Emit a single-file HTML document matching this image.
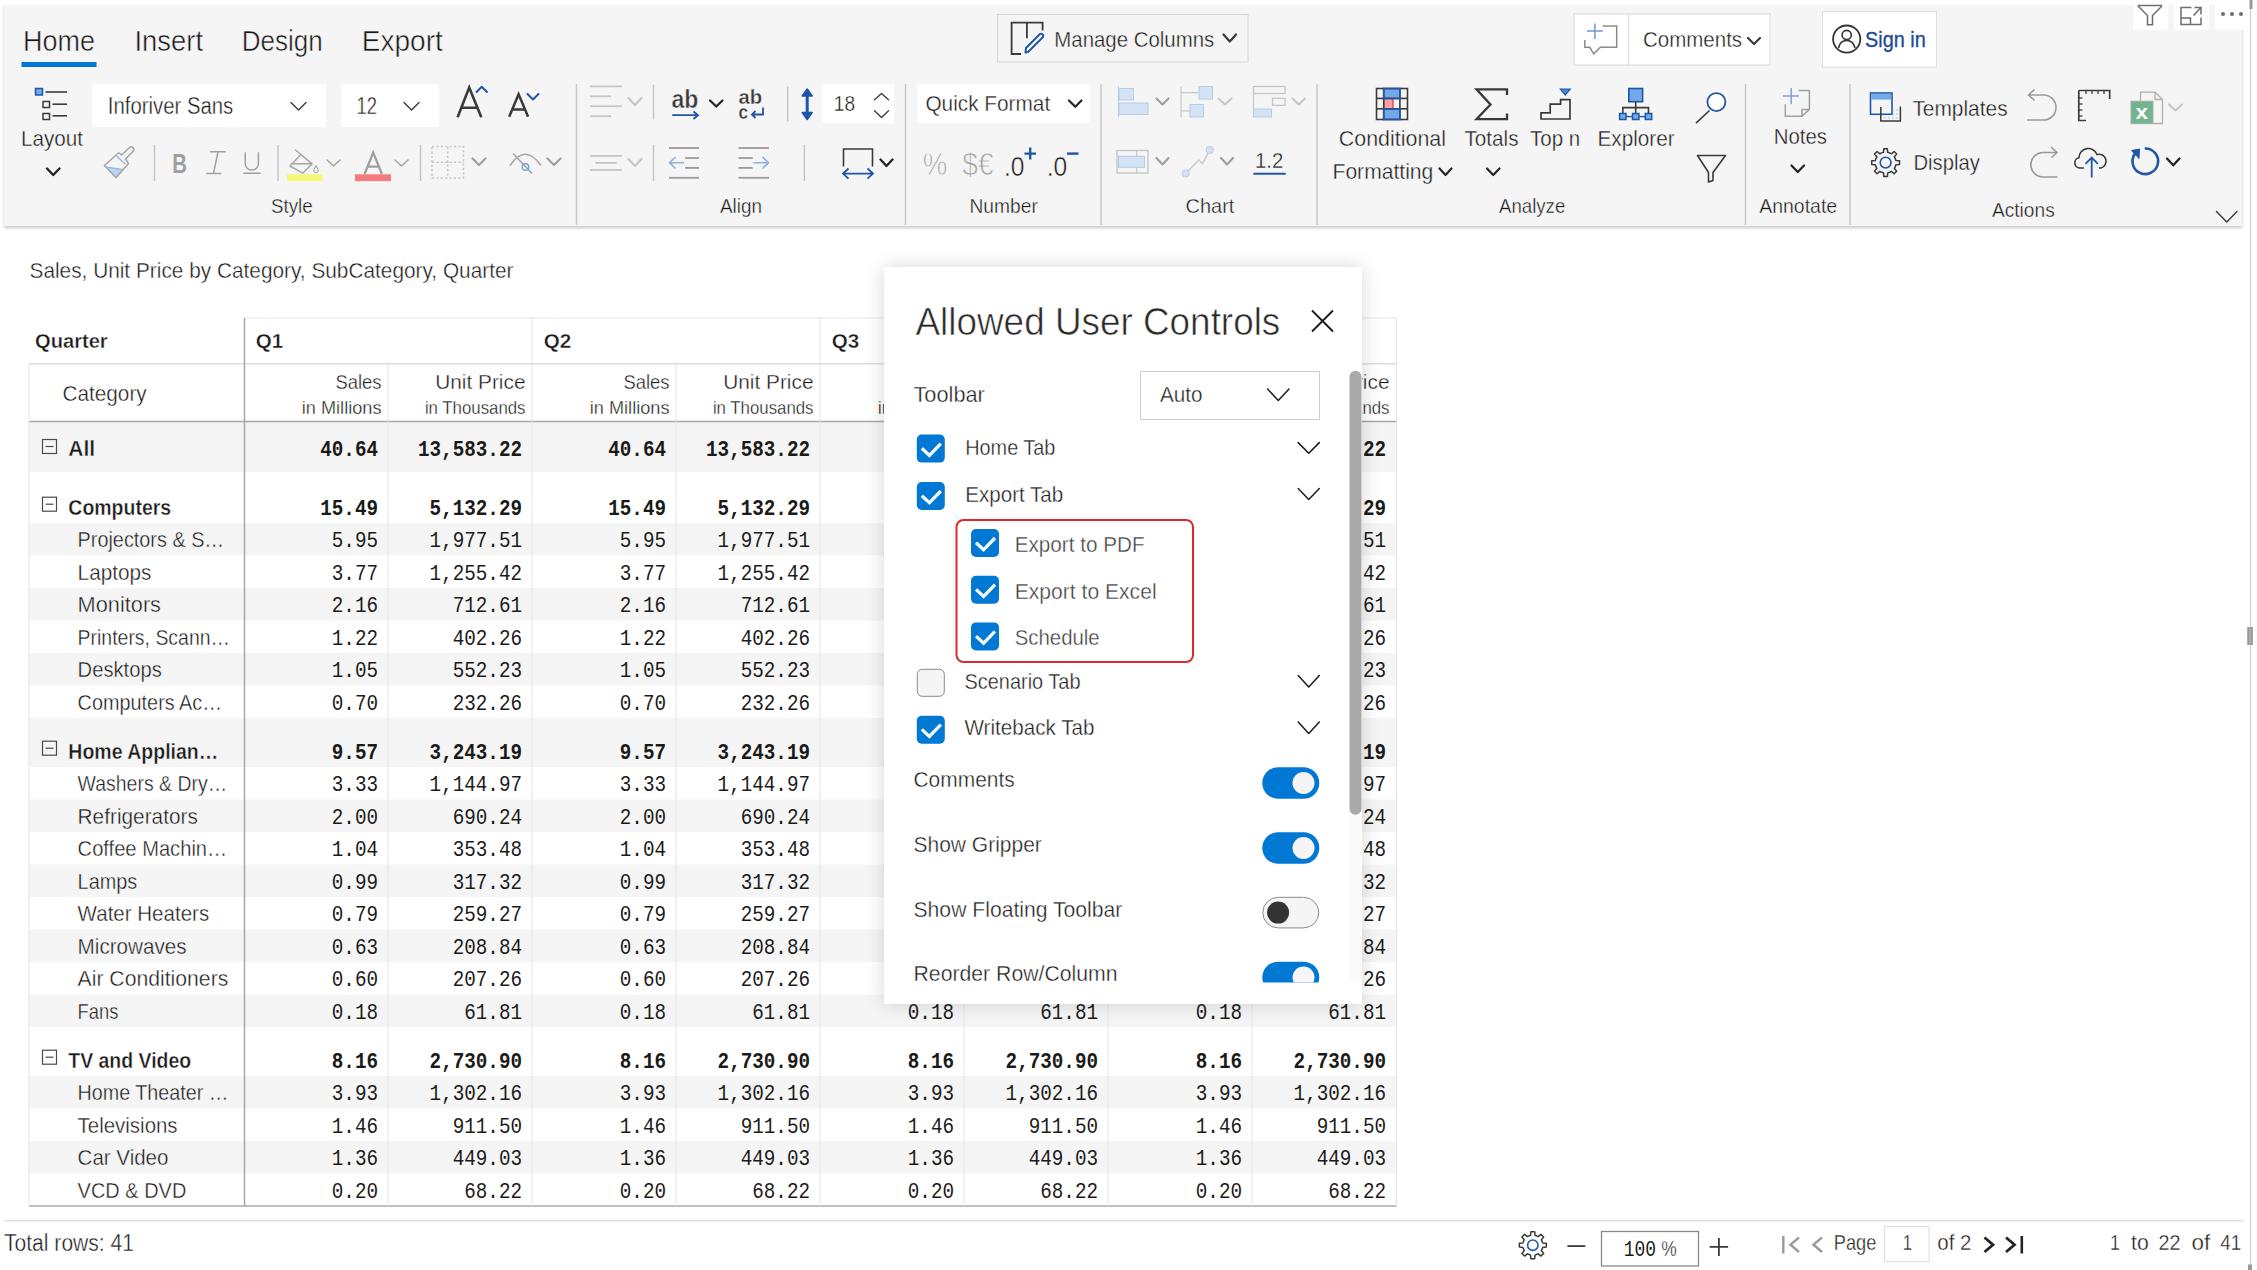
<!DOCTYPE html>
<html><head><meta charset="utf-8"><title>Inforiver</title>
<style>
html,body{margin:0;padding:0;background:#fff;width:2257px;height:1270px;overflow:hidden;font-family:"Liberation Sans",sans-serif;}
svg{position:absolute;left:0;top:0;font-family:"Liberation Sans",sans-serif;}
.rib{position:absolute;left:4px;top:5px;width:2238px;height:221px;background:#f5f5f5;box-shadow:0 2px 3px rgba(0,0,0,0.22);}
.dlg{position:absolute;left:884px;top:267px;width:478px;height:737px;background:#fff;box-shadow:0 0 18px rgba(0,0,0,0.16);}
</style></head><body>
<div class="rib"></div>
<svg width="2257" height="1270" viewBox="0 0 2257 1270">
<text x="23" y="51" font-size="29" fill="#1b1a19" textLength="72" lengthAdjust="spacingAndGlyphs"  stroke="#f5f5f5" stroke-width="0.49">Home</text>
<rect x="21.5" y="62" width="75" height="5" fill="#0078d4" />
<text x="134.5" y="51" font-size="29" fill="#1b1a19" textLength="68.5" lengthAdjust="spacingAndGlyphs"  stroke="#f5f5f5" stroke-width="0.49">Insert</text>
<text x="241.7" y="51" font-size="29" fill="#1b1a19" textLength="81" lengthAdjust="spacingAndGlyphs"  stroke="#f5f5f5" stroke-width="0.49">Design</text>
<text x="361.8" y="51" font-size="29" fill="#1b1a19" textLength="81" lengthAdjust="spacingAndGlyphs"  stroke="#f5f5f5" stroke-width="0.49">Export</text>
<line x1="576.5" y1="84" x2="576.5" y2="225" stroke="#c8c8c8" stroke-width="1.5" />
<line x1="905.5" y1="84" x2="905.5" y2="225" stroke="#c8c8c8" stroke-width="1.5" />
<line x1="1101" y1="84" x2="1101" y2="225" stroke="#c8c8c8" stroke-width="1.5" />
<line x1="1317" y1="84" x2="1317" y2="225" stroke="#c8c8c8" stroke-width="1.5" />
<line x1="1745.5" y1="84" x2="1745.5" y2="225" stroke="#c8c8c8" stroke-width="1.5" />
<line x1="1850" y1="84" x2="1850" y2="225" stroke="#c8c8c8" stroke-width="1.5" />
<text x="271" y="213" font-size="21" fill="#1b1a19" textLength="41.7" lengthAdjust="spacingAndGlyphs"  stroke="#f5f5f5" stroke-width="0.36">Style</text>
<text x="720" y="212.5" font-size="21" fill="#1b1a19" textLength="42" lengthAdjust="spacingAndGlyphs"  stroke="#f5f5f5" stroke-width="0.36">Align</text>
<text x="969.5" y="212.5" font-size="21" fill="#1b1a19" textLength="68.3" lengthAdjust="spacingAndGlyphs"  stroke="#f5f5f5" stroke-width="0.36">Number</text>
<text x="1185.6" y="213" font-size="21" fill="#1b1a19" textLength="48.8" lengthAdjust="spacingAndGlyphs"  stroke="#f5f5f5" stroke-width="0.36">Chart</text>
<text x="1499" y="212.5" font-size="21" fill="#1b1a19" textLength="66.3" lengthAdjust="spacingAndGlyphs"  stroke="#f5f5f5" stroke-width="0.36">Analyze</text>
<text x="1759.2" y="212.5" font-size="21" fill="#1b1a19" textLength="78" lengthAdjust="spacingAndGlyphs"  stroke="#f5f5f5" stroke-width="0.36">Annotate</text>
<text x="1992" y="216.8" font-size="21" fill="#1b1a19" textLength="62.7" lengthAdjust="spacingAndGlyphs"  stroke="#f5f5f5" stroke-width="0.36">Actions</text>
<rect x="997.5" y="14.5" width="250.5" height="47.5" fill="none" stroke="#d6d6d6" stroke-width="1"/>
<path d="M1021 54 L1011.6 54 L1011.6 22.7 L1042.6 22.7 L1042.6 30.5 M1026.9 22.7 L1026.9 38.2" stroke="#3b3a39" stroke-width="1.8" fill="none" />
<path d="M1028 52 L1041 39 L1043 37 a2.2 2.2 0 0 0 -3 -3 L1026 48 L1025.5 52.5 Z" stroke="#1e56a8" stroke-width="2" fill="#fff" stroke-linecap="round" stroke-linejoin="round"/>
<text x="1054.3" y="46.6" font-size="22.5" fill="#1b1a19" textLength="160" lengthAdjust="spacingAndGlyphs"  stroke="#f5f5f5" stroke-width="0.38">Manage Columns</text>
<path d="M1223.5 34.5 L1229.75 41.5 L1236 34.5" stroke="#3b3a39" stroke-width="2.2" fill="none" stroke-linecap="round" stroke-linejoin="round"/>
<rect x="1574" y="14" width="196" height="51" fill="#fff" stroke="#dadada" stroke-width="1"/>
<line x1="1628.7" y1="14" x2="1628.7" y2="65" stroke="#dadada" stroke-width="1" />
<path d="M1602.8 26 L1616.7 26 L1616.7 47.3 L1600.3 47.3 L1593.8 53.9 L1589.7 47.3 L1584.8 47.3 L1584.8 40" stroke="#8a8a8a" stroke-width="1.5" fill="none" />
<path d="M1586.9 31 L1602.8 31 M1594.9 23.6 L1594.9 39.1" stroke="#6f98d0" stroke-width="1.5" fill="none" />
<text x="1643" y="47.3" font-size="22.5" fill="#1b1a19" textLength="99.1" lengthAdjust="spacingAndGlyphs"  stroke="#ffffff" stroke-width="0.38">Comments</text>
<path d="M1748 38 L1754.0 44 L1760 38" stroke="#3b3a39" stroke-width="2.2" fill="none" stroke-linecap="round" stroke-linejoin="round"/>
<rect x="1822.5" y="11.5" width="114" height="55.5" fill="#fff" stroke="#e0e0e0" stroke-width="1"/>
<circle cx="1846.7" cy="39.1" r="13.6" fill="none" stroke="#333" stroke-width="1.8"/>
<circle cx="1846.7" cy="35" r="4.6" fill="none" stroke="#333" stroke-width="1.6"/>
<path d="M1838.5 48 Q1840 40.5 1846.7 40.5 Q1853.4 40.5 1855 48" stroke="#333" stroke-width="1.6" fill="none" />
<text x="1865.1" y="47.3" font-size="22.5" fill="#1d4b98" textLength="60.6" lengthAdjust="spacingAndGlyphs" stroke="#1d4b98" stroke-width="0.35">Sign in</text>
<rect x="2133" y="0" width="35" height="30" fill="#fff" />
<rect x="2174" y="0" width="35" height="30" fill="#fff" />
<rect x="2215" y="0" width="29" height="30" fill="#fff" />
<path d="M2138.5 5.5 L2161.5 5.5 L2161.5 6.5 L2152.5 15.5 L2152.5 24.8 L2147.5 24.8 L2147.5 15.5 L2138.5 6.5 Z" stroke="#6e6e6e" stroke-width="1.5" fill="none" />
<path d="M2191.5 7.5 L2181 7.5 L2181 24.5 L2201 24.5 L2201 17.5 M2181 18 L2190.5 18 L2190.5 24.5 M2193.5 15.5 L2200.5 8 M2194.5 7.5 L2201 7.5 L2201 14.5" stroke="#6e6e6e" stroke-width="1.5" fill="none" />
<circle cx="2223" cy="14.1" r="2" fill="#6e6e6e"/>
<circle cx="2232" cy="14.1" r="2" fill="#6e6e6e"/>
<circle cx="2241" cy="14.1" r="2" fill="#6e6e6e"/>
<rect x="35.5" y="88.5" width="7" height="6.5" fill="#72a9e8" stroke="#1e56a8" stroke-width="1.5"/>
<line x1="45.5" y1="92" x2="67" y2="92" stroke="#3b3a39" stroke-width="1.6" />
<rect x="43" y="101.5" width="6.5" height="6" fill="none" stroke="#3b3a39" stroke-width="1.5"/>
<line x1="52.5" y1="104.2" x2="67" y2="104.2" stroke="#3b3a39" stroke-width="1.6" />
<rect x="43" y="113.5" width="6.5" height="6" fill="none" stroke="#3b3a39" stroke-width="1.5"/>
<line x1="52.5" y1="115.8" x2="67" y2="115.8" stroke="#3b3a39" stroke-width="1.6" />
<text x="21" y="146" font-size="22.7" fill="#1b1a19" textLength="62" lengthAdjust="spacingAndGlyphs"  stroke="#f5f5f5" stroke-width="0.39">Layout</text>
<path d="M47 168.5 L53.25 175 L59.5 168.5" stroke="#252423" stroke-width="2.4" fill="none" stroke-linecap="round" stroke-linejoin="round"/>
<rect x="92" y="84" width="234" height="43" fill="#fff" />
<text x="107.8" y="114" font-size="23" fill="#1b1a19" textLength="125.5" lengthAdjust="spacingAndGlyphs"  stroke="#ffffff" stroke-width="0.39">Inforiver Sans</text>
<path d="M291 102.5 L298.5 110 L306 102.5" stroke="#3b3a39" stroke-width="1.4" fill="none" stroke-linecap="round" stroke-linejoin="round"/>
<rect x="341" y="84" width="98" height="43" fill="#fff" />
<text x="356.6" y="114" font-size="23" fill="#1b1a19" textLength="20.5" lengthAdjust="spacingAndGlyphs"  stroke="#ffffff" stroke-width="0.39">12</text>
<path d="M404 102.5 L411.5 110 L419 102.5" stroke="#3b3a39" stroke-width="1.4" fill="none" stroke-linecap="round" stroke-linejoin="round"/>
<path d="M457.6 117.2 L469.2 87.5 L481.3 117.2 M461.5 107.8 L477 107.8" stroke="#3b3a39" stroke-width="2.6" fill="none" />
<path d="M476.5 92 L481.75 86.8 L487 92" stroke="#1e56a8" stroke-width="2" fill="none" stroke-linecap="round" stroke-linejoin="round"/>
<path d="M509.2 116.7 L518.6 94.3 L528.1 116.7 M512.3 109.6 L525 109.6" stroke="#3b3a39" stroke-width="2.5" fill="none" />
<path d="M527.5 94 L533.0 99.5 L538.5 94" stroke="#1e56a8" stroke-width="2" fill="none" stroke-linecap="round" stroke-linejoin="round"/>
<path d="M105.5 167 L124 169.5 L116 177.7 Z" stroke="none" stroke-width="1" fill="#b5d3f3" />
<path d="M105.5 167 L124 169.5" stroke="#8bb3e0" stroke-width="1.2" fill="none" />
<path d="M104.4 165.5 L118.8 152.7 L121.5 155 L129.3 147.7 A2.6 2.6 0 0 1 133 151.4 L125.5 159 L128.5 163.5 L116 177.7 Z" stroke="#a6a6a6" stroke-width="1.5" fill="none" stroke-linecap="round" stroke-linejoin="round"/>
<line x1="116.6" y1="156" x2="125.5" y2="164.4" stroke="#8bb3e0" stroke-width="1.3" />
<line x1="154.5" y1="145" x2="154.5" y2="181" stroke="#c6c6c6" stroke-width="1.5" />
<text x="172.3" y="173.4" font-size="28.5" font-weight="bold" fill="#a0a0a0" textLength="14.7" lengthAdjust="spacingAndGlyphs" >B</text>
<path d="M210.2 151.8 L225.7 151.8 M206.3 173.4 L221.3 173.4 M218 151.8 L213.5 173.4" stroke="#a0a0a0" stroke-width="1.5" fill="none" />
<path d="M245.2 152.2 L245.2 163.5 A6.6 6.6 0 0 0 258.4 163.5 L258.4 152.2 M243.4 173.3 L260.6 173.3" stroke="#a0a0a0" stroke-width="1.5" fill="none" />
<line x1="278" y1="145" x2="278" y2="181" stroke="#c6c6c6" stroke-width="1.5" />
<path d="M295.5 150 L312.1 163.8 L302.7 173.2 L290 166 L300 155.5 M291.6 163.8 L311 163.8" stroke="#a6a6a6" stroke-width="1.5" fill="none" stroke-linecap="round" stroke-linejoin="round"/>
<path d="M316 165.8 Q313.3 170 314 171.5 Q316 174 318 171.5 Q318.7 170 316 165.8 Z" stroke="#a6a6a6" stroke-width="1.2" fill="none" />
<rect x="287" y="174.3" width="36" height="6.8" fill="#f7f77a" />
<path d="M327 160 L333.5 166 L340 160" stroke="#a0a0a0" stroke-width="1.4" fill="none" stroke-linecap="round" stroke-linejoin="round"/>
<path d="M364.6 174 L373.2 152.5 L381.9 174 M367.5 166.6 L379 166.6" stroke="#a0a0a0" stroke-width="2.3" fill="none" />
<rect x="355" y="174.3" width="36" height="6.8" fill="#f47b7b" />
<path d="M395 160 L401.5 166 L408 160" stroke="#a0a0a0" stroke-width="1.4" fill="none" stroke-linecap="round" stroke-linejoin="round"/>
<line x1="420.5" y1="145" x2="420.5" y2="181" stroke="#c6c6c6" stroke-width="1.5" />
<rect x="432" y="146.5" width="31.5" height="31.5" fill="none" stroke="#c6c6c6" stroke-width="1.5" stroke-dasharray="2.2 2.2"/>
<line x1="447.7" y1="147" x2="447.7" y2="178" stroke="#c6c6c6" stroke-width="1.5" stroke-dasharray="2.2 2.2"/>
<line x1="432" y1="162.2" x2="463.5" y2="162.2" stroke="#c6c6c6" stroke-width="1.5" stroke-dasharray="2.2 2.2"/>
<path d="M472.5 158.5 L479.0 165 L485.5 158.5" stroke="#a0a0a0" stroke-width="2.2" fill="none" stroke-linecap="round" stroke-linejoin="round"/>
<path d="M510 165.5 Q525 143 541 165.5" stroke="#a6a6a6" stroke-width="1.6" fill="none" />
<line x1="513" y1="153.5" x2="532" y2="173.5" stroke="#a6a6a6" stroke-width="1.6" />
<circle cx="525.5" cy="167" r="3.3" fill="none" stroke="#7aa3d8" stroke-width="1.4"/>
<path d="M547.5 158.5 L554.0 165 L560.5 158.5" stroke="#a0a0a0" stroke-width="2.2" fill="none" stroke-linecap="round" stroke-linejoin="round"/>
<line x1="590" y1="86.4" x2="621.8" y2="86.4" stroke="#c6c6c6" stroke-width="1.8" />
<line x1="590" y1="96.3" x2="611.2" y2="96.3" stroke="#c6c6c6" stroke-width="1.8" />
<line x1="590" y1="106.2" x2="621.8" y2="106.2" stroke="#c6c6c6" stroke-width="1.8" />
<line x1="590" y1="116.2" x2="611.2" y2="116.2" stroke="#c6c6c6" stroke-width="1.8" />
<path d="M628.5 98 L635.0 105 L641.5 98" stroke="#c6c6c6" stroke-width="2.2" fill="none" stroke-linecap="round" stroke-linejoin="round"/>
<line x1="653.5" y1="84.5" x2="653.5" y2="119.5" stroke="#c6c6c6" stroke-width="1.5" />
<text x="671.5" y="108.4" font-size="25" font-weight="bold" fill="#3b3a39" textLength="26.9" lengthAdjust="spacingAndGlyphs" font-weight="600" stroke="#f5f5f5" stroke-width="0.43">ab</text>
<path d="M672.2 115.2 L698 115.2 M693.5 111.5 L698 115.2 L693.5 119" stroke="#1e56a8" stroke-width="1.8" fill="none" />
<path d="M710 100.5 L716.25 106.5 L722.5 100.5" stroke="#252423" stroke-width="2.3" fill="none" stroke-linecap="round" stroke-linejoin="round"/>
<text x="738.5" y="104.1" font-size="19.5" font-weight="bold" fill="#3b3a39" textLength="23.7" lengthAdjust="spacingAndGlyphs"  stroke="#f5f5f5" stroke-width="0.33">ab</text>
<text x="738.5" y="118.6" font-size="19.5" font-weight="bold" fill="#3b3a39" textLength="9.5" lengthAdjust="spacingAndGlyphs"  stroke="#f5f5f5" stroke-width="0.33">c</text>
<path d="M763 107.5 L763 114.5 L752 114.5 M755.5 111 L752 114.5 L755.5 118" stroke="#1e56a8" stroke-width="1.8" fill="none" />
<line x1="787.7" y1="86.5" x2="787.7" y2="121.5" stroke="#c6c6c6" stroke-width="1.5" />
<path d="M807.2 90 L807.2 118.5" stroke="#1e56a8" stroke-width="3" fill="none" />
<path d="M802.2 96 L807.2 89 L812.2 96 Z M802.2 112.5 L807.2 119.5 L812.2 112.5 Z" stroke="#1e56a8" stroke-width="1.5" fill="#1e56a8" stroke-linecap="round" stroke-linejoin="round"/>
<rect x="822" y="84" width="72" height="39" fill="#fff" />
<text x="833.8" y="110.5" font-size="22" fill="#1b1a19" textLength="21.2" lengthAdjust="spacingAndGlyphs"  stroke="#ffffff" stroke-width="0.37">18</text>
<path d="M874.5 99.8 L881.5 93.5 L888.5 99.8" stroke="#3b3a39" stroke-width="1.3" fill="none" stroke-linecap="round" stroke-linejoin="round"/>
<path d="M874.5 110.8 L881.5 117.5 L888.5 110.8" stroke="#3b3a39" stroke-width="1.3" fill="none" stroke-linecap="round" stroke-linejoin="round"/>
<line x1="590" y1="155.9" x2="621.8" y2="155.9" stroke="#c6c6c6" stroke-width="1.8" />
<line x1="595.3" y1="162.9" x2="616.6" y2="162.9" stroke="#c6c6c6" stroke-width="1.8" />
<line x1="590" y1="170" x2="621.8" y2="170" stroke="#c6c6c6" stroke-width="1.8" />
<path d="M628.5 159 L635.0 166 L641.5 159" stroke="#c6c6c6" stroke-width="2.2" fill="none" stroke-linecap="round" stroke-linejoin="round"/>
<line x1="653.5" y1="145" x2="653.5" y2="181" stroke="#c6c6c6" stroke-width="1.5" />
<line x1="669" y1="148" x2="699" y2="148" stroke="#9a9a9a" stroke-width="1.8" />
<line x1="685.2" y1="158" x2="699" y2="158" stroke="#9a9a9a" stroke-width="1.8" />
<line x1="685.2" y1="167.9" x2="699" y2="167.9" stroke="#9a9a9a" stroke-width="1.8" />
<line x1="669" y1="177.8" x2="699" y2="177.8" stroke="#9a9a9a" stroke-width="1.8" />
<path d="M684 162.7 L670 162.7 M675.5 157 L669.5 162.7 L675.5 168.5" stroke="#8fb1dd" stroke-width="1.6" fill="none" />
<line x1="738.5" y1="148" x2="769" y2="148" stroke="#9a9a9a" stroke-width="1.8" />
<line x1="738.5" y1="158" x2="752.7" y2="158" stroke="#9a9a9a" stroke-width="1.8" />
<line x1="738.5" y1="167.9" x2="752.7" y2="167.9" stroke="#9a9a9a" stroke-width="1.8" />
<line x1="738.5" y1="177.8" x2="769" y2="177.8" stroke="#9a9a9a" stroke-width="1.8" />
<path d="M753.5 162.7 L768 162.7 M762.5 157 L768.5 162.7 L762.5 168.5" stroke="#8fb1dd" stroke-width="1.6" fill="none" />
<line x1="804.4" y1="145" x2="804.4" y2="181" stroke="#c6c6c6" stroke-width="1.5" />
<path d="M843.5 166.5 L843.5 149 L872.5 149 L872.5 166.5" stroke="#3b3a39" stroke-width="1.6" fill="none" />
<path d="M843 173.6 L873 173.6 M848.5 168.5 L843 173.6 L848.5 178.7 M867.5 168.5 L873 173.6 L867.5 178.7" stroke="#1e56a8" stroke-width="1.8" fill="none" />
<path d="M880.5 159.5 L886.5 166 L892.5 159.5" stroke="#252423" stroke-width="2.3" fill="none" stroke-linecap="round" stroke-linejoin="round"/>
<rect x="917" y="84" width="173" height="39" fill="#fff" />
<text x="925.4" y="110.5" font-size="22" fill="#1b1a19" textLength="124.8" lengthAdjust="spacingAndGlyphs"  stroke="#ffffff" stroke-width="0.37">Quick Format</text>
<path d="M1069 100.5 L1075.25 106.8 L1081.5 100.5" stroke="#252423" stroke-width="2.2" fill="none" stroke-linecap="round" stroke-linejoin="round"/>
<text x="922.7" y="174.5" font-size="32" fill="#a0a0a0" textLength="24.5" lengthAdjust="spacingAndGlyphs" stroke="#f5f5f5" stroke-width="0.8">%</text>
<text x="962.3" y="174.5" font-size="31" fill="#a0a0a0" textLength="31.3" lengthAdjust="spacingAndGlyphs" stroke="#f5f5f5" stroke-width="0.8">$€</text>
<text x="1004" y="175.6" font-size="28.5" fill="#1b1a19" textLength="20.5" lengthAdjust="spacingAndGlyphs"  stroke="#f5f5f5" stroke-width="0.48">.0</text>
<path d="M1024.5 153.6 L1036 153.6 M1030.2 147.5 L1030.2 159.5" stroke="#1e56a8" stroke-width="2.4" fill="none" />
<text x="1046.8" y="175.6" font-size="28.5" fill="#1b1a19" textLength="20.5" lengthAdjust="spacingAndGlyphs"  stroke="#f5f5f5" stroke-width="0.48">.0</text>
<line x1="1067" y1="153.6" x2="1078.5" y2="153.6" stroke="#1e56a8" stroke-width="2.4" />
<line x1="1118.5" y1="86.4" x2="1118.5" y2="117.2" stroke="#b4cdea" stroke-width="1.2" />
<rect x="1119" y="88.5" width="14.5" height="11.5" fill="#d3e3f5" stroke="#b4cdea" stroke-width="1"/>
<rect x="1119" y="103" width="29" height="11.5" fill="#d3e3f5" stroke="#b4cdea" stroke-width="1"/>
<path d="M1156.5 98.5 L1162.5 104.5 L1168.5 98.5" stroke="#a0a0a0" stroke-width="2.2" fill="none" stroke-linecap="round" stroke-linejoin="round"/>
<path d="M1181 86.4 L1181 117.2 M1181 92.7 L1198.8 92.7 M1181 110.9 L1189.7 110.9" stroke="#c6c6c6" stroke-width="1.2" fill="none" />
<rect x="1199" y="86.5" width="13.5" height="12.5" fill="#d3e3f5" stroke="#b4cdea" stroke-width="1"/>
<rect x="1190" y="104.5" width="13.5" height="12.5" fill="#d3e3f5" stroke="#b4cdea" stroke-width="1"/>
<path d="M1218.5 98.5 L1225.0 104.5 L1231.5 98.5" stroke="#c6c6c6" stroke-width="2" fill="none" stroke-linecap="round" stroke-linejoin="round"/>
<line x1="1253.5" y1="86.4" x2="1253.5" y2="117.2" stroke="#c6c6c6" stroke-width="1.2" />
<rect x="1253.5" y="86.5" width="31.5" height="7" fill="none" stroke="#c6c6c6" stroke-width="1.3"/>
<rect x="1272.5" y="98.3" width="12.5" height="7" fill="none" stroke="#c6c6c6" stroke-width="1.3"/>
<rect x="1253.5" y="109" width="18" height="8" fill="#d3e3f5" stroke="#b4cdea" stroke-width="1"/>
<path d="M1292.5 98.5 L1298.75 104.5 L1305 98.5" stroke="#c6c6c6" stroke-width="2" fill="none" stroke-linecap="round" stroke-linejoin="round"/>
<rect x="1117" y="150.5" width="31" height="22.5" fill="none" stroke="#c6c6c6" stroke-width="1.4"/>
<rect x="1118.5" y="156.3" width="26" height="11" fill="#d3e3f5" stroke="#b4cdea" stroke-width="1"/>
<line x1="1136.7" y1="150.5" x2="1136.7" y2="156.3" stroke="#c6c6c6" stroke-width="1.2" />
<line x1="1136.7" y1="167.3" x2="1136.7" y2="173" stroke="#c6c6c6" stroke-width="1.2" />
<path d="M1156.5 158 L1162.5 164.5 L1168.5 158" stroke="#a0a0a0" stroke-width="2.2" fill="none" stroke-linecap="round" stroke-linejoin="round"/>
<path d="M1185.7 173.5 L1198.8 159.9 L1202.5 163.9 L1209.7 149.9" stroke="#c6c6c6" stroke-width="1.3" fill="none" />
<circle cx="1185.7" cy="173.5" r="3.6" fill="#d3e3f5" stroke="#b4cdea" stroke-width="1"/>
<circle cx="1209.7" cy="149.9" r="3.6" fill="#d3e3f5" stroke="#b4cdea" stroke-width="1"/>
<path d="M1221 158 L1227.0 164.5 L1233 158" stroke="#a0a0a0" stroke-width="2.2" fill="none" stroke-linecap="round" stroke-linejoin="round"/>
<text x="1255" y="168.1" font-size="22" fill="#1b1a19" textLength="28.3" lengthAdjust="spacingAndGlyphs"  stroke="#f5f5f5" stroke-width="0.37">1.2</text>
<line x1="1253.3" y1="173.8" x2="1285.7" y2="173.8" stroke="#1e56a8" stroke-width="2" />
<rect x="1383.7" y="88.3" width="16.2" height="10.1" fill="#72a9e8" />
<rect x="1383.7" y="108.8" width="16.2" height="10.9" fill="#72a9e8" />
<rect x="1383.7" y="98.4" width="9.3" height="10.4" fill="#f9a0a0" stroke="#d33" stroke-width="1.2"/>
<rect x="1376.5" y="88.5" width="31" height="31" fill="none" stroke="#3b3a39" stroke-width="1.6"/>
<line x1="1376.5" y1="98.4" x2="1407.5" y2="98.4" stroke="#3b3a39" stroke-width="1.6" />
<line x1="1376.5" y1="108.8" x2="1407.5" y2="108.8" stroke="#3b3a39" stroke-width="1.6" />
<line x1="1383.7" y1="88.5" x2="1383.7" y2="119.5" stroke="#3b3a39" stroke-width="1.6" />
<line x1="1399.9" y1="88.5" x2="1399.9" y2="119.5" stroke="#3b3a39" stroke-width="1.6" />
<rect x="1383.7" y="88.5" width="16.2" height="10" fill="none" stroke="#1e56a8" stroke-width="1.6"/>
<rect x="1383.7" y="108.8" width="16.2" height="10.7" fill="none" stroke="#1e56a8" stroke-width="1.6"/>
<text x="1338.8" y="145.9" font-size="22" fill="#1b1a19" textLength="107.2" lengthAdjust="spacingAndGlyphs"  stroke="#f5f5f5" stroke-width="0.37">Conditional</text>
<text x="1332.5" y="178.5" font-size="22" fill="#1b1a19" textLength="100.8" lengthAdjust="spacingAndGlyphs"  stroke="#f5f5f5" stroke-width="0.37">Formatting</text>
<path d="M1439.5 168.5 L1445.5 175 L1451.5 168.5" stroke="#252423" stroke-width="2.2" fill="none" stroke-linecap="round" stroke-linejoin="round"/>
<path d="M1507 95 L1507 89.3 L1476.5 89.3 L1490.5 104.5 L1476.5 119.2 L1507 119.2 L1507 113.5" stroke="#3b3a39" stroke-width="2.3" fill="none" />
<text x="1464.4" y="145.9" font-size="22" fill="#1b1a19" textLength="54.1" lengthAdjust="spacingAndGlyphs"  stroke="#f5f5f5" stroke-width="0.37">Totals</text>
<path d="M1487 168.5 L1493.25 175 L1499.5 168.5" stroke="#252423" stroke-width="2.2" fill="none" stroke-linecap="round" stroke-linejoin="round"/>
<path d="M1541 119 L1541 112.8 L1550.2 112.8 L1550.2 108 L1550.2 104.2 L1560.6 104.2 L1560.6 99.6 L1570 99.6 L1570 119 Z" stroke="#3b3a39" stroke-width="1.7" fill="none" />
<path d="M1560.3 89 L1570.2 89 L1565.25 95 Z" stroke="#1e56a8" stroke-width="1.2" fill="#4c8ad6" />
<text x="1530" y="145.9" font-size="22" fill="#1b1a19" textLength="50.2" lengthAdjust="spacingAndGlyphs"  stroke="#f5f5f5" stroke-width="0.37">Top n</text>
<rect x="1628.8" y="88.5" width="13.8" height="13.2" fill="#72a9e8" stroke="#1e56a8" stroke-width="1.6"/>
<path d="M1635.7 101.7 L1635.7 113.5 M1622.8 113.5 L1622.8 107.6 L1648.5 107.6 L1648.5 113.5" stroke="#3b3a39" stroke-width="1.6" fill="none" />
<rect x="1619.6" y="113.5" width="6.4" height="6" fill="#72a9e8" stroke="#1e56a8" stroke-width="1.5"/>
<rect x="1632.5" y="113.5" width="6.4" height="6" fill="#72a9e8" stroke="#1e56a8" stroke-width="1.5"/>
<rect x="1645.3" y="113.5" width="6.4" height="6" fill="#72a9e8" stroke="#1e56a8" stroke-width="1.5"/>
<line x1="1626" y1="116.6" x2="1632.5" y2="116.6" stroke="#1e56a8" stroke-width="1.4" />
<line x1="1639" y1="116.6" x2="1645.3" y2="116.6" stroke="#1e56a8" stroke-width="1.4" />
<text x="1597.5" y="145.9" font-size="22" fill="#1b1a19" textLength="77.2" lengthAdjust="spacingAndGlyphs"  stroke="#f5f5f5" stroke-width="0.37">Explorer</text>
<circle cx="1716.4" cy="102.1" r="9" fill="#fff" stroke="#1e56a8" stroke-width="1.8"/>
<line x1="1696" y1="123.2" x2="1709.5" y2="110.5" stroke="#3b3a39" stroke-width="1.6" />
<path d="M1697.5 155.5 L1725.5 155.5 L1713 172.5 L1713 180.5 L1708.5 182 L1708.5 172.5 Z" stroke="#3b3a39" stroke-width="1.6" fill="none" stroke-linejoin="round"/>
<path d="M1798.5 90.5 L1809.4 90.5 L1809.4 109.4 L1802 116.3 L1785.3 116.3 L1785.3 104.2 M1809.4 109.4 L1802 109.4 L1802 116.3" stroke="#a0a0a0" stroke-width="1.5" fill="none" />
<path d="M1783 96.1 L1799 96.1 M1791.2 88.1 L1791.2 104.2" stroke="#7ea3d4" stroke-width="1.5" fill="none" />
<text x="1773.7" y="143.9" font-size="22" fill="#1b1a19" textLength="53.4" lengthAdjust="spacingAndGlyphs"  stroke="#f5f5f5" stroke-width="0.37">Notes</text>
<path d="M1791.5 165.5 L1797.75 172 L1804 165.5" stroke="#252423" stroke-width="2.2" fill="none" stroke-linecap="round" stroke-linejoin="round"/>
<rect x="1870.5" y="93" width="21.5" height="21.3" fill="none" stroke="#1e56a8" stroke-width="1.6"/>
<rect x="1871.3" y="93.8" width="20" height="5.8" fill="#72a9e8" />
<path d="M1880.8 107 L1880.8 121 L1900.4 121 L1900.4 106.4" stroke="#3b3a39" stroke-width="1.5" fill="none" />
<circle cx="1885" cy="118" r="0.7" fill="#8fb1dd"/>
<circle cx="1889" cy="118" r="0.7" fill="#8fb1dd"/>
<circle cx="1893" cy="118" r="0.7" fill="#8fb1dd"/>
<circle cx="1897" cy="118" r="0.7" fill="#8fb1dd"/>
<circle cx="1893" cy="110" r="0.7" fill="#8fb1dd"/>
<circle cx="1893" cy="114" r="0.7" fill="#8fb1dd"/>
<circle cx="1897" cy="110" r="0.7" fill="#8fb1dd"/>
<circle cx="1897" cy="114" r="0.7" fill="#8fb1dd"/>
<text x="1912.4" y="115.9" font-size="22.5" fill="#1b1a19" textLength="95.2" lengthAdjust="spacingAndGlyphs"  stroke="#f5f5f5" stroke-width="0.38">Templates</text>
<path d="M1895.89 160.51 L1899.48 160.79 L1899.48 164.41 L1895.89 164.69 L1895.30 166.62 L1894.35 168.40 L1896.70 171.13 L1894.13 173.70 L1891.40 171.35 L1889.62 172.30 L1887.69 172.89 L1887.41 176.48 L1883.79 176.48 L1883.51 172.89 L1881.58 172.30 L1879.80 171.35 L1877.07 173.70 L1874.50 171.13 L1876.85 168.40 L1875.90 166.62 L1875.31 164.69 L1871.72 164.41 L1871.72 160.79 L1875.31 160.51 L1875.90 158.58 L1876.85 156.80 L1874.50 154.07 L1877.07 151.50 L1879.80 153.85 L1881.58 152.90 L1883.51 152.31 L1883.79 148.72 L1887.41 148.72 L1887.69 152.31 L1889.62 152.90 L1891.40 153.85 L1894.13 151.50 L1896.70 154.07 L1894.35 156.80 L1895.30 158.58 Z" stroke="#3b3a39" stroke-width="1.5" fill="none" stroke-linejoin="round"/>
<circle cx="1885.6" cy="162.6" r="5.4" fill="none" stroke="#1e56a8" stroke-width="1.6"/>
<text x="1913.5" y="170.4" font-size="22.5" fill="#1b1a19" textLength="66.3" lengthAdjust="spacingAndGlyphs"  stroke="#f5f5f5" stroke-width="0.38">Display</text>
<path d="M2029 95 L2043.5 95 A12.5 12.5 0 0 1 2043.5 120 L2027 120 M2034.5 89.5 L2028.5 95 L2034.5 100.5" stroke="#9a9a9a" stroke-width="1.6" fill="none" />
<path d="M2078.8 90.5 L2078.8 120.5 L2086 120.5 M2078.8 90.5 L2109.7 90.5 L2109.7 99" stroke="#3b3a39" stroke-width="1.7" fill="none" />
<line x1="2086" y1="90.5" x2="2086" y2="94" stroke="#3b3a39" stroke-width="1.3" />
<line x1="2092" y1="90.5" x2="2092" y2="94" stroke="#3b3a39" stroke-width="1.3" />
<line x1="2098" y1="90.5" x2="2098" y2="94" stroke="#3b3a39" stroke-width="1.3" />
<line x1="2104" y1="90.5" x2="2104" y2="94" stroke="#3b3a39" stroke-width="1.3" />
<line x1="2078.8" y1="98" x2="2082.5" y2="98" stroke="#3b3a39" stroke-width="1.3" />
<line x1="2078.8" y1="104" x2="2082.5" y2="104" stroke="#3b3a39" stroke-width="1.3" />
<line x1="2078.8" y1="110" x2="2082.5" y2="110" stroke="#3b3a39" stroke-width="1.3" />
<line x1="2078.8" y1="116" x2="2082.5" y2="116" stroke="#3b3a39" stroke-width="1.3" />
<path d="M2140.5 101 L2140.5 92.2 L2155 92.2 L2162.5 99.5 L2162.5 123.5 L2153 123.5 M2155 92.2 L2155 99.5 L2162.5 99.5" stroke="#b0b0b0" stroke-width="1.3" fill="none" />
<rect x="2131" y="101.2" width="22" height="22.5" fill="#6fb58d" stroke="#aaaaaa" stroke-width="1"/>
<text x="2135.5" y="119" font-size="20" font-weight="bold" fill="#fff" textLength="12.5" lengthAdjust="spacingAndGlyphs" >x</text>
<path d="M2169 104.5 L2175.5 110.5 L2182 104.5" stroke="#c6c6c6" stroke-width="2" fill="none" stroke-linecap="round" stroke-linejoin="round"/>
<path d="M2056 152.5 L2042 152.5 A12.3 12.3 0 0 0 2042 177 L2057.5 177 M2051 147 L2057 152.5 L2051.5 157.5" stroke="#9a9a9a" stroke-width="1.6" fill="none" />
<path d="M2084 168 L2080 168 A5.2 5.2 0 0 1 2079 157.7 A9.3 9.3 0 0 1 2097 154.5 A6.8 6.8 0 0 1 2101 168 L2099 168" stroke="#3b3a39" stroke-width="1.6" fill="none" />
<path d="M2091.7 177.5 L2091.7 157.8 M2085.5 163.8 L2091.7 157.5 L2097.9 163.8" stroke="#1e56a8" stroke-width="1.8" fill="none" />
<path d="M2136.5 152 A12.8 12.8 0 1 0 2144.7 148.5" stroke="#1e56a8" stroke-width="2.6" fill="none" />
<path d="M2131.5 150.5 L2139 158.5 L2139.5 149 Z" stroke="#1e56a8" stroke-width="1" fill="#1e56a8" />
<path d="M2167 158.5 L2173.25 165.3 L2179.5 158.5" stroke="#252423" stroke-width="2.3" fill="none" stroke-linecap="round" stroke-linejoin="round"/>
<path d="M2216.5 211.5 L2226.75 222 L2237 211.5" stroke="#3b3a39" stroke-width="1.4" fill="none" stroke-linecap="round" stroke-linejoin="round"/>
<rect x="29" y="421.5" width="1367.5" height="50.5" fill="#f5f5f5" />
<rect x="29" y="523.0" width="1367.5" height="32.5" fill="#f5f5f5" />
<rect x="29" y="588.0" width="1367.5" height="32.5" fill="#f5f5f5" />
<rect x="29" y="653.0" width="1367.5" height="32.5" fill="#f5f5f5" />
<rect x="29" y="718.0" width="1367.5" height="49" fill="#f5f5f5" />
<rect x="29" y="799.5" width="1367.5" height="32.5" fill="#f5f5f5" />
<rect x="29" y="864.5" width="1367.5" height="32.5" fill="#f5f5f5" />
<rect x="29" y="929.5" width="1367.5" height="32.5" fill="#f5f5f5" />
<rect x="29" y="994.5" width="1367.5" height="32.5" fill="#f5f5f5" />
<rect x="29" y="1076.0" width="1367.5" height="32.5" fill="#f5f5f5" />
<rect x="29" y="1141.0" width="1367.5" height="32.5" fill="#f5f5f5" />
<line x1="244" y1="318" x2="1396.5" y2="318" stroke="#e4e4e4" stroke-width="1" />
<line x1="29" y1="363.7" x2="1396.5" y2="363.7" stroke="#dcdcdc" stroke-width="1.4" />
<line x1="29" y1="421.5" x2="1396.5" y2="421.5" stroke="#a8a8a8" stroke-width="1.5" />
<line x1="29" y1="1206" x2="1396.5" y2="1206" stroke="#a8a8a8" stroke-width="1.5" />
<line x1="29" y1="363.5" x2="29" y2="1206" stroke="#e4e4e4" stroke-width="1" />
<line x1="244.5" y1="318" x2="244.5" y2="1206" stroke="#a8a8a8" stroke-width="1.5" />
<line x1="532" y1="318" x2="532" y2="1206" stroke="#e4e4e4" stroke-width="1" />
<line x1="820" y1="318" x2="820" y2="1206" stroke="#e4e4e4" stroke-width="1" />
<line x1="1108" y1="318" x2="1108" y2="1206" stroke="#e4e4e4" stroke-width="1" />
<line x1="1396.5" y1="318" x2="1396.5" y2="1206" stroke="#e4e4e4" stroke-width="1" />
<line x1="388" y1="363.5" x2="388" y2="1206" stroke="#e4e4e4" stroke-width="1" />
<line x1="676" y1="363.5" x2="676" y2="1206" stroke="#e4e4e4" stroke-width="1" />
<line x1="964" y1="363.5" x2="964" y2="1206" stroke="#e4e4e4" stroke-width="1" />
<line x1="1252" y1="363.5" x2="1252" y2="1206" stroke="#e4e4e4" stroke-width="1" />
<text x="29.5" y="278" font-size="22.6" fill="#1b1a19" textLength="484" lengthAdjust="spacingAndGlyphs"  stroke="#ffffff" stroke-width="0.38">Sales, Unit Price by Category, SubCategory, Quarter</text>
<text x="35" y="347.6" font-size="21" font-weight="bold" fill="#1b1a19" textLength="72.7" lengthAdjust="spacingAndGlyphs"  stroke="#ffffff" stroke-width="0.36">Quarter</text>
<text x="62.5" y="400.7" font-size="22.3" fill="#1b1a19" textLength="84.2" lengthAdjust="spacingAndGlyphs"  stroke="#ffffff" stroke-width="0.38">Category</text>
<text x="255.7" y="347.6" font-size="21" font-weight="bold" fill="#1b1a19" textLength="27.5" lengthAdjust="spacingAndGlyphs"  stroke="#ffffff" stroke-width="0.36">Q1</text>
<text x="381.5" y="389.3" font-size="21" fill="#1b1a19" text-anchor="end" textLength="46" lengthAdjust="spacingAndGlyphs"  stroke="#ffffff" stroke-width="0.36">Sales</text>
<text x="381.5" y="413.7" font-size="18" fill="#1b1a19" text-anchor="end" textLength="79.7" lengthAdjust="spacingAndGlyphs"  stroke="#ffffff" stroke-width="0.31">in Millions</text>
<text x="525.5" y="389.3" font-size="21" fill="#1b1a19" text-anchor="end" textLength="90.3" lengthAdjust="spacingAndGlyphs"  stroke="#ffffff" stroke-width="0.36">Unit Price</text>
<text x="525.5" y="413.7" font-size="18" fill="#1b1a19" text-anchor="end" textLength="100.6" lengthAdjust="spacingAndGlyphs"  stroke="#ffffff" stroke-width="0.31">in Thousands</text>
<text x="543.7" y="347.6" font-size="21" font-weight="bold" fill="#1b1a19" textLength="27.5" lengthAdjust="spacingAndGlyphs"  stroke="#ffffff" stroke-width="0.36">Q2</text>
<text x="669.5" y="389.3" font-size="21" fill="#1b1a19" text-anchor="end" textLength="46" lengthAdjust="spacingAndGlyphs"  stroke="#ffffff" stroke-width="0.36">Sales</text>
<text x="669.5" y="413.7" font-size="18" fill="#1b1a19" text-anchor="end" textLength="79.7" lengthAdjust="spacingAndGlyphs"  stroke="#ffffff" stroke-width="0.31">in Millions</text>
<text x="813.5" y="389.3" font-size="21" fill="#1b1a19" text-anchor="end" textLength="90.3" lengthAdjust="spacingAndGlyphs"  stroke="#ffffff" stroke-width="0.36">Unit Price</text>
<text x="813.5" y="413.7" font-size="18" fill="#1b1a19" text-anchor="end" textLength="100.6" lengthAdjust="spacingAndGlyphs"  stroke="#ffffff" stroke-width="0.31">in Thousands</text>
<text x="831.7" y="347.6" font-size="21" font-weight="bold" fill="#1b1a19" textLength="27.5" lengthAdjust="spacingAndGlyphs"  stroke="#ffffff" stroke-width="0.36">Q3</text>
<text x="957.5" y="389.3" font-size="21" fill="#1b1a19" text-anchor="end" textLength="46" lengthAdjust="spacingAndGlyphs"  stroke="#ffffff" stroke-width="0.36">Sales</text>
<text x="957.5" y="413.7" font-size="18" fill="#1b1a19" text-anchor="end" textLength="79.7" lengthAdjust="spacingAndGlyphs"  stroke="#ffffff" stroke-width="0.31">in Millions</text>
<text x="1101.5" y="389.3" font-size="21" fill="#1b1a19" text-anchor="end" textLength="90.3" lengthAdjust="spacingAndGlyphs"  stroke="#ffffff" stroke-width="0.36">Unit Price</text>
<text x="1101.5" y="413.7" font-size="18" fill="#1b1a19" text-anchor="end" textLength="100.6" lengthAdjust="spacingAndGlyphs"  stroke="#ffffff" stroke-width="0.31">in Thousands</text>
<text x="1119.7" y="347.6" font-size="21" font-weight="bold" fill="#1b1a19" textLength="27.5" lengthAdjust="spacingAndGlyphs"  stroke="#ffffff" stroke-width="0.36">Q4</text>
<text x="1245.5" y="389.3" font-size="21" fill="#1b1a19" text-anchor="end" textLength="46" lengthAdjust="spacingAndGlyphs"  stroke="#ffffff" stroke-width="0.36">Sales</text>
<text x="1245.5" y="413.7" font-size="18" fill="#1b1a19" text-anchor="end" textLength="79.7" lengthAdjust="spacingAndGlyphs"  stroke="#ffffff" stroke-width="0.31">in Millions</text>
<text x="1389.5" y="389.3" font-size="21" fill="#1b1a19" text-anchor="end" textLength="90.3" lengthAdjust="spacingAndGlyphs"  stroke="#ffffff" stroke-width="0.36">Unit Price</text>
<text x="1389.5" y="413.7" font-size="18" fill="#1b1a19" text-anchor="end" textLength="100.6" lengthAdjust="spacingAndGlyphs"  stroke="#ffffff" stroke-width="0.31">in Thousands</text>
<rect x="42.5" y="439.5" width="14" height="14" fill="none" stroke="#4a4a4a" stroke-width="1.2"/>
<line x1="45.5" y1="446.5" x2="53.5" y2="446.5" stroke="#4a4a4a" stroke-width="1.2" />
<text x="68.3" y="455.5" font-size="22" font-weight="bold" fill="#1b1a19" textLength="26.9" lengthAdjust="spacingAndGlyphs"  stroke="#f5f5f5" stroke-width="0.37">All</text>
<text x="378" y="455.5" font-size="22" font-family="Liberation Mono" font-weight="bold" fill="#1b1a19" text-anchor="end" textLength="57.75" lengthAdjust="spacingAndGlyphs" >40.64</text>
<text x="522" y="455.5" font-size="22" font-family="Liberation Mono" font-weight="bold" fill="#1b1a19" text-anchor="end" textLength="103.95" lengthAdjust="spacingAndGlyphs" >13,583.22</text>
<text x="666" y="455.5" font-size="22" font-family="Liberation Mono" font-weight="bold" fill="#1b1a19" text-anchor="end" textLength="57.75" lengthAdjust="spacingAndGlyphs" >40.64</text>
<text x="810" y="455.5" font-size="22" font-family="Liberation Mono" font-weight="bold" fill="#1b1a19" text-anchor="end" textLength="103.95" lengthAdjust="spacingAndGlyphs" >13,583.22</text>
<text x="954" y="455.5" font-size="22" font-family="Liberation Mono" font-weight="bold" fill="#1b1a19" text-anchor="end" textLength="57.75" lengthAdjust="spacingAndGlyphs" >40.64</text>
<text x="1098" y="455.5" font-size="22" font-family="Liberation Mono" font-weight="bold" fill="#1b1a19" text-anchor="end" textLength="103.95" lengthAdjust="spacingAndGlyphs" >13,583.22</text>
<text x="1242" y="455.5" font-size="22" font-family="Liberation Mono" font-weight="bold" fill="#1b1a19" text-anchor="end" textLength="57.75" lengthAdjust="spacingAndGlyphs" >40.64</text>
<text x="1386" y="455.5" font-size="22" font-family="Liberation Mono" font-weight="bold" fill="#1b1a19" text-anchor="end" textLength="103.95" lengthAdjust="spacingAndGlyphs" >13,583.22</text>
<rect x="42.5" y="497.19999999999993" width="14" height="14" fill="none" stroke="#4a4a4a" stroke-width="1.2"/>
<line x1="45.5" y1="504.19999999999993" x2="53.5" y2="504.19999999999993" stroke="#4a4a4a" stroke-width="1.2" />
<text x="68.3" y="514.8" font-size="22" font-weight="bold" fill="#1b1a19" textLength="102.9" lengthAdjust="spacingAndGlyphs"  stroke="#ffffff" stroke-width="0.37">Computers</text>
<text x="378" y="514.8" font-size="22" font-family="Liberation Mono" font-weight="bold" fill="#1b1a19" text-anchor="end" textLength="57.75" lengthAdjust="spacingAndGlyphs" >15.49</text>
<text x="522" y="514.8" font-size="22" font-family="Liberation Mono" font-weight="bold" fill="#1b1a19" text-anchor="end" textLength="92.4" lengthAdjust="spacingAndGlyphs" >5,132.29</text>
<text x="666" y="514.8" font-size="22" font-family="Liberation Mono" font-weight="bold" fill="#1b1a19" text-anchor="end" textLength="57.75" lengthAdjust="spacingAndGlyphs" >15.49</text>
<text x="810" y="514.8" font-size="22" font-family="Liberation Mono" font-weight="bold" fill="#1b1a19" text-anchor="end" textLength="92.4" lengthAdjust="spacingAndGlyphs" >5,132.29</text>
<text x="954" y="514.8" font-size="22" font-family="Liberation Mono" font-weight="bold" fill="#1b1a19" text-anchor="end" textLength="57.75" lengthAdjust="spacingAndGlyphs" >15.49</text>
<text x="1098" y="514.8" font-size="22" font-family="Liberation Mono" font-weight="bold" fill="#1b1a19" text-anchor="end" textLength="92.4" lengthAdjust="spacingAndGlyphs" >5,132.29</text>
<text x="1242" y="514.8" font-size="22" font-family="Liberation Mono" font-weight="bold" fill="#1b1a19" text-anchor="end" textLength="57.75" lengthAdjust="spacingAndGlyphs" >15.49</text>
<text x="1386" y="514.8" font-size="22" font-family="Liberation Mono" font-weight="bold" fill="#1b1a19" text-anchor="end" textLength="92.4" lengthAdjust="spacingAndGlyphs" >5,132.29</text>
<text x="77.6" y="547.2" font-size="22" fill="#1b1a19" textLength="146.6" lengthAdjust="spacingAndGlyphs"  stroke="#f5f5f5" stroke-width="0.37">Projectors &amp; S…</text>
<text x="378" y="547.2" font-size="22" font-family="Liberation Mono" fill="#1b1a19" text-anchor="end" textLength="46.2" lengthAdjust="spacingAndGlyphs" >5.95</text>
<text x="522" y="547.2" font-size="22" font-family="Liberation Mono" fill="#1b1a19" text-anchor="end" textLength="92.4" lengthAdjust="spacingAndGlyphs" >1,977.51</text>
<text x="666" y="547.2" font-size="22" font-family="Liberation Mono" fill="#1b1a19" text-anchor="end" textLength="46.2" lengthAdjust="spacingAndGlyphs" >5.95</text>
<text x="810" y="547.2" font-size="22" font-family="Liberation Mono" fill="#1b1a19" text-anchor="end" textLength="92.4" lengthAdjust="spacingAndGlyphs" >1,977.51</text>
<text x="954" y="547.2" font-size="22" font-family="Liberation Mono" fill="#1b1a19" text-anchor="end" textLength="46.2" lengthAdjust="spacingAndGlyphs" >5.95</text>
<text x="1098" y="547.2" font-size="22" font-family="Liberation Mono" fill="#1b1a19" text-anchor="end" textLength="92.4" lengthAdjust="spacingAndGlyphs" >1,977.51</text>
<text x="1242" y="547.2" font-size="22" font-family="Liberation Mono" fill="#1b1a19" text-anchor="end" textLength="46.2" lengthAdjust="spacingAndGlyphs" >5.95</text>
<text x="1386" y="547.2" font-size="22" font-family="Liberation Mono" fill="#1b1a19" text-anchor="end" textLength="92.4" lengthAdjust="spacingAndGlyphs" >1,977.51</text>
<text x="77.6" y="579.7" font-size="22" fill="#1b1a19" textLength="73.8" lengthAdjust="spacingAndGlyphs"  stroke="#ffffff" stroke-width="0.37">Laptops</text>
<text x="378" y="579.7" font-size="22" font-family="Liberation Mono" fill="#1b1a19" text-anchor="end" textLength="46.2" lengthAdjust="spacingAndGlyphs" >3.77</text>
<text x="522" y="579.7" font-size="22" font-family="Liberation Mono" fill="#1b1a19" text-anchor="end" textLength="92.4" lengthAdjust="spacingAndGlyphs" >1,255.42</text>
<text x="666" y="579.7" font-size="22" font-family="Liberation Mono" fill="#1b1a19" text-anchor="end" textLength="46.2" lengthAdjust="spacingAndGlyphs" >3.77</text>
<text x="810" y="579.7" font-size="22" font-family="Liberation Mono" fill="#1b1a19" text-anchor="end" textLength="92.4" lengthAdjust="spacingAndGlyphs" >1,255.42</text>
<text x="954" y="579.7" font-size="22" font-family="Liberation Mono" fill="#1b1a19" text-anchor="end" textLength="46.2" lengthAdjust="spacingAndGlyphs" >3.77</text>
<text x="1098" y="579.7" font-size="22" font-family="Liberation Mono" fill="#1b1a19" text-anchor="end" textLength="92.4" lengthAdjust="spacingAndGlyphs" >1,255.42</text>
<text x="1242" y="579.7" font-size="22" font-family="Liberation Mono" fill="#1b1a19" text-anchor="end" textLength="46.2" lengthAdjust="spacingAndGlyphs" >3.77</text>
<text x="1386" y="579.7" font-size="22" font-family="Liberation Mono" fill="#1b1a19" text-anchor="end" textLength="92.4" lengthAdjust="spacingAndGlyphs" >1,255.42</text>
<text x="77.6" y="612.2" font-size="22" fill="#1b1a19" textLength="83.4" lengthAdjust="spacingAndGlyphs"  stroke="#f5f5f5" stroke-width="0.37">Monitors</text>
<text x="378" y="612.2" font-size="22" font-family="Liberation Mono" fill="#1b1a19" text-anchor="end" textLength="46.2" lengthAdjust="spacingAndGlyphs" >2.16</text>
<text x="522" y="612.2" font-size="22" font-family="Liberation Mono" fill="#1b1a19" text-anchor="end" textLength="69.30000000000001" lengthAdjust="spacingAndGlyphs" >712.61</text>
<text x="666" y="612.2" font-size="22" font-family="Liberation Mono" fill="#1b1a19" text-anchor="end" textLength="46.2" lengthAdjust="spacingAndGlyphs" >2.16</text>
<text x="810" y="612.2" font-size="22" font-family="Liberation Mono" fill="#1b1a19" text-anchor="end" textLength="69.30000000000001" lengthAdjust="spacingAndGlyphs" >712.61</text>
<text x="954" y="612.2" font-size="22" font-family="Liberation Mono" fill="#1b1a19" text-anchor="end" textLength="46.2" lengthAdjust="spacingAndGlyphs" >2.16</text>
<text x="1098" y="612.2" font-size="22" font-family="Liberation Mono" fill="#1b1a19" text-anchor="end" textLength="69.30000000000001" lengthAdjust="spacingAndGlyphs" >712.61</text>
<text x="1242" y="612.2" font-size="22" font-family="Liberation Mono" fill="#1b1a19" text-anchor="end" textLength="46.2" lengthAdjust="spacingAndGlyphs" >2.16</text>
<text x="1386" y="612.2" font-size="22" font-family="Liberation Mono" fill="#1b1a19" text-anchor="end" textLength="69.30000000000001" lengthAdjust="spacingAndGlyphs" >712.61</text>
<text x="77.6" y="644.7" font-size="22" fill="#1b1a19" textLength="152.4" lengthAdjust="spacingAndGlyphs"  stroke="#ffffff" stroke-width="0.37">Printers, Scann…</text>
<text x="378" y="644.7" font-size="22" font-family="Liberation Mono" fill="#1b1a19" text-anchor="end" textLength="46.2" lengthAdjust="spacingAndGlyphs" >1.22</text>
<text x="522" y="644.7" font-size="22" font-family="Liberation Mono" fill="#1b1a19" text-anchor="end" textLength="69.30000000000001" lengthAdjust="spacingAndGlyphs" >402.26</text>
<text x="666" y="644.7" font-size="22" font-family="Liberation Mono" fill="#1b1a19" text-anchor="end" textLength="46.2" lengthAdjust="spacingAndGlyphs" >1.22</text>
<text x="810" y="644.7" font-size="22" font-family="Liberation Mono" fill="#1b1a19" text-anchor="end" textLength="69.30000000000001" lengthAdjust="spacingAndGlyphs" >402.26</text>
<text x="954" y="644.7" font-size="22" font-family="Liberation Mono" fill="#1b1a19" text-anchor="end" textLength="46.2" lengthAdjust="spacingAndGlyphs" >1.22</text>
<text x="1098" y="644.7" font-size="22" font-family="Liberation Mono" fill="#1b1a19" text-anchor="end" textLength="69.30000000000001" lengthAdjust="spacingAndGlyphs" >402.26</text>
<text x="1242" y="644.7" font-size="22" font-family="Liberation Mono" fill="#1b1a19" text-anchor="end" textLength="46.2" lengthAdjust="spacingAndGlyphs" >1.22</text>
<text x="1386" y="644.7" font-size="22" font-family="Liberation Mono" fill="#1b1a19" text-anchor="end" textLength="69.30000000000001" lengthAdjust="spacingAndGlyphs" >402.26</text>
<text x="77.6" y="677.2" font-size="22" fill="#1b1a19" textLength="84.2" lengthAdjust="spacingAndGlyphs"  stroke="#f5f5f5" stroke-width="0.37">Desktops</text>
<text x="378" y="677.2" font-size="22" font-family="Liberation Mono" fill="#1b1a19" text-anchor="end" textLength="46.2" lengthAdjust="spacingAndGlyphs" >1.05</text>
<text x="522" y="677.2" font-size="22" font-family="Liberation Mono" fill="#1b1a19" text-anchor="end" textLength="69.30000000000001" lengthAdjust="spacingAndGlyphs" >552.23</text>
<text x="666" y="677.2" font-size="22" font-family="Liberation Mono" fill="#1b1a19" text-anchor="end" textLength="46.2" lengthAdjust="spacingAndGlyphs" >1.05</text>
<text x="810" y="677.2" font-size="22" font-family="Liberation Mono" fill="#1b1a19" text-anchor="end" textLength="69.30000000000001" lengthAdjust="spacingAndGlyphs" >552.23</text>
<text x="954" y="677.2" font-size="22" font-family="Liberation Mono" fill="#1b1a19" text-anchor="end" textLength="46.2" lengthAdjust="spacingAndGlyphs" >1.05</text>
<text x="1098" y="677.2" font-size="22" font-family="Liberation Mono" fill="#1b1a19" text-anchor="end" textLength="69.30000000000001" lengthAdjust="spacingAndGlyphs" >552.23</text>
<text x="1242" y="677.2" font-size="22" font-family="Liberation Mono" fill="#1b1a19" text-anchor="end" textLength="46.2" lengthAdjust="spacingAndGlyphs" >1.05</text>
<text x="1386" y="677.2" font-size="22" font-family="Liberation Mono" fill="#1b1a19" text-anchor="end" textLength="69.30000000000001" lengthAdjust="spacingAndGlyphs" >552.23</text>
<text x="77.6" y="709.7" font-size="22" fill="#1b1a19" textLength="144.5" lengthAdjust="spacingAndGlyphs"  stroke="#ffffff" stroke-width="0.37">Computers Ac…</text>
<text x="378" y="709.7" font-size="22" font-family="Liberation Mono" fill="#1b1a19" text-anchor="end" textLength="46.2" lengthAdjust="spacingAndGlyphs" >0.70</text>
<text x="522" y="709.7" font-size="22" font-family="Liberation Mono" fill="#1b1a19" text-anchor="end" textLength="69.30000000000001" lengthAdjust="spacingAndGlyphs" >232.26</text>
<text x="666" y="709.7" font-size="22" font-family="Liberation Mono" fill="#1b1a19" text-anchor="end" textLength="46.2" lengthAdjust="spacingAndGlyphs" >0.70</text>
<text x="810" y="709.7" font-size="22" font-family="Liberation Mono" fill="#1b1a19" text-anchor="end" textLength="69.30000000000001" lengthAdjust="spacingAndGlyphs" >232.26</text>
<text x="954" y="709.7" font-size="22" font-family="Liberation Mono" fill="#1b1a19" text-anchor="end" textLength="46.2" lengthAdjust="spacingAndGlyphs" >0.70</text>
<text x="1098" y="709.7" font-size="22" font-family="Liberation Mono" fill="#1b1a19" text-anchor="end" textLength="69.30000000000001" lengthAdjust="spacingAndGlyphs" >232.26</text>
<text x="1242" y="709.7" font-size="22" font-family="Liberation Mono" fill="#1b1a19" text-anchor="end" textLength="46.2" lengthAdjust="spacingAndGlyphs" >0.70</text>
<text x="1386" y="709.7" font-size="22" font-family="Liberation Mono" fill="#1b1a19" text-anchor="end" textLength="69.30000000000001" lengthAdjust="spacingAndGlyphs" >232.26</text>
<rect x="42.5" y="741.1999999999999" width="14" height="14" fill="none" stroke="#4a4a4a" stroke-width="1.2"/>
<line x1="45.5" y1="748.1999999999999" x2="53.5" y2="748.1999999999999" stroke="#4a4a4a" stroke-width="1.2" />
<text x="68.3" y="758.8" font-size="22" font-weight="bold" fill="#1b1a19" textLength="150" lengthAdjust="spacingAndGlyphs"  stroke="#f5f5f5" stroke-width="0.37">Home Applian…</text>
<text x="378" y="758.8" font-size="22" font-family="Liberation Mono" font-weight="bold" fill="#1b1a19" text-anchor="end" textLength="46.2" lengthAdjust="spacingAndGlyphs" >9.57</text>
<text x="522" y="758.8" font-size="22" font-family="Liberation Mono" font-weight="bold" fill="#1b1a19" text-anchor="end" textLength="92.4" lengthAdjust="spacingAndGlyphs" >3,243.19</text>
<text x="666" y="758.8" font-size="22" font-family="Liberation Mono" font-weight="bold" fill="#1b1a19" text-anchor="end" textLength="46.2" lengthAdjust="spacingAndGlyphs" >9.57</text>
<text x="810" y="758.8" font-size="22" font-family="Liberation Mono" font-weight="bold" fill="#1b1a19" text-anchor="end" textLength="92.4" lengthAdjust="spacingAndGlyphs" >3,243.19</text>
<text x="954" y="758.8" font-size="22" font-family="Liberation Mono" font-weight="bold" fill="#1b1a19" text-anchor="end" textLength="46.2" lengthAdjust="spacingAndGlyphs" >9.57</text>
<text x="1098" y="758.8" font-size="22" font-family="Liberation Mono" font-weight="bold" fill="#1b1a19" text-anchor="end" textLength="92.4" lengthAdjust="spacingAndGlyphs" >3,243.19</text>
<text x="1242" y="758.8" font-size="22" font-family="Liberation Mono" font-weight="bold" fill="#1b1a19" text-anchor="end" textLength="46.2" lengthAdjust="spacingAndGlyphs" >9.57</text>
<text x="1386" y="758.8" font-size="22" font-family="Liberation Mono" font-weight="bold" fill="#1b1a19" text-anchor="end" textLength="92.4" lengthAdjust="spacingAndGlyphs" >3,243.19</text>
<text x="77.6" y="791.2" font-size="22" fill="#1b1a19" textLength="149.6" lengthAdjust="spacingAndGlyphs"  stroke="#ffffff" stroke-width="0.37">Washers &amp; Dry…</text>
<text x="378" y="791.2" font-size="22" font-family="Liberation Mono" fill="#1b1a19" text-anchor="end" textLength="46.2" lengthAdjust="spacingAndGlyphs" >3.33</text>
<text x="522" y="791.2" font-size="22" font-family="Liberation Mono" fill="#1b1a19" text-anchor="end" textLength="92.4" lengthAdjust="spacingAndGlyphs" >1,144.97</text>
<text x="666" y="791.2" font-size="22" font-family="Liberation Mono" fill="#1b1a19" text-anchor="end" textLength="46.2" lengthAdjust="spacingAndGlyphs" >3.33</text>
<text x="810" y="791.2" font-size="22" font-family="Liberation Mono" fill="#1b1a19" text-anchor="end" textLength="92.4" lengthAdjust="spacingAndGlyphs" >1,144.97</text>
<text x="954" y="791.2" font-size="22" font-family="Liberation Mono" fill="#1b1a19" text-anchor="end" textLength="46.2" lengthAdjust="spacingAndGlyphs" >3.33</text>
<text x="1098" y="791.2" font-size="22" font-family="Liberation Mono" fill="#1b1a19" text-anchor="end" textLength="92.4" lengthAdjust="spacingAndGlyphs" >1,144.97</text>
<text x="1242" y="791.2" font-size="22" font-family="Liberation Mono" fill="#1b1a19" text-anchor="end" textLength="46.2" lengthAdjust="spacingAndGlyphs" >3.33</text>
<text x="1386" y="791.2" font-size="22" font-family="Liberation Mono" fill="#1b1a19" text-anchor="end" textLength="92.4" lengthAdjust="spacingAndGlyphs" >1,144.97</text>
<text x="77.6" y="823.7" font-size="22" fill="#1b1a19" textLength="120.2" lengthAdjust="spacingAndGlyphs"  stroke="#f5f5f5" stroke-width="0.37">Refrigerators</text>
<text x="378" y="823.7" font-size="22" font-family="Liberation Mono" fill="#1b1a19" text-anchor="end" textLength="46.2" lengthAdjust="spacingAndGlyphs" >2.00</text>
<text x="522" y="823.7" font-size="22" font-family="Liberation Mono" fill="#1b1a19" text-anchor="end" textLength="69.30000000000001" lengthAdjust="spacingAndGlyphs" >690.24</text>
<text x="666" y="823.7" font-size="22" font-family="Liberation Mono" fill="#1b1a19" text-anchor="end" textLength="46.2" lengthAdjust="spacingAndGlyphs" >2.00</text>
<text x="810" y="823.7" font-size="22" font-family="Liberation Mono" fill="#1b1a19" text-anchor="end" textLength="69.30000000000001" lengthAdjust="spacingAndGlyphs" >690.24</text>
<text x="954" y="823.7" font-size="22" font-family="Liberation Mono" fill="#1b1a19" text-anchor="end" textLength="46.2" lengthAdjust="spacingAndGlyphs" >2.00</text>
<text x="1098" y="823.7" font-size="22" font-family="Liberation Mono" fill="#1b1a19" text-anchor="end" textLength="69.30000000000001" lengthAdjust="spacingAndGlyphs" >690.24</text>
<text x="1242" y="823.7" font-size="22" font-family="Liberation Mono" fill="#1b1a19" text-anchor="end" textLength="46.2" lengthAdjust="spacingAndGlyphs" >2.00</text>
<text x="1386" y="823.7" font-size="22" font-family="Liberation Mono" fill="#1b1a19" text-anchor="end" textLength="69.30000000000001" lengthAdjust="spacingAndGlyphs" >690.24</text>
<text x="77.6" y="856.2" font-size="22" fill="#1b1a19" textLength="149.6" lengthAdjust="spacingAndGlyphs"  stroke="#ffffff" stroke-width="0.37">Coffee Machin…</text>
<text x="378" y="856.2" font-size="22" font-family="Liberation Mono" fill="#1b1a19" text-anchor="end" textLength="46.2" lengthAdjust="spacingAndGlyphs" >1.04</text>
<text x="522" y="856.2" font-size="22" font-family="Liberation Mono" fill="#1b1a19" text-anchor="end" textLength="69.30000000000001" lengthAdjust="spacingAndGlyphs" >353.48</text>
<text x="666" y="856.2" font-size="22" font-family="Liberation Mono" fill="#1b1a19" text-anchor="end" textLength="46.2" lengthAdjust="spacingAndGlyphs" >1.04</text>
<text x="810" y="856.2" font-size="22" font-family="Liberation Mono" fill="#1b1a19" text-anchor="end" textLength="69.30000000000001" lengthAdjust="spacingAndGlyphs" >353.48</text>
<text x="954" y="856.2" font-size="22" font-family="Liberation Mono" fill="#1b1a19" text-anchor="end" textLength="46.2" lengthAdjust="spacingAndGlyphs" >1.04</text>
<text x="1098" y="856.2" font-size="22" font-family="Liberation Mono" fill="#1b1a19" text-anchor="end" textLength="69.30000000000001" lengthAdjust="spacingAndGlyphs" >353.48</text>
<text x="1242" y="856.2" font-size="22" font-family="Liberation Mono" fill="#1b1a19" text-anchor="end" textLength="46.2" lengthAdjust="spacingAndGlyphs" >1.04</text>
<text x="1386" y="856.2" font-size="22" font-family="Liberation Mono" fill="#1b1a19" text-anchor="end" textLength="69.30000000000001" lengthAdjust="spacingAndGlyphs" >353.48</text>
<text x="77.6" y="888.7" font-size="22" fill="#1b1a19" textLength="59.6" lengthAdjust="spacingAndGlyphs"  stroke="#f5f5f5" stroke-width="0.37">Lamps</text>
<text x="378" y="888.7" font-size="22" font-family="Liberation Mono" fill="#1b1a19" text-anchor="end" textLength="46.2" lengthAdjust="spacingAndGlyphs" >0.99</text>
<text x="522" y="888.7" font-size="22" font-family="Liberation Mono" fill="#1b1a19" text-anchor="end" textLength="69.30000000000001" lengthAdjust="spacingAndGlyphs" >317.32</text>
<text x="666" y="888.7" font-size="22" font-family="Liberation Mono" fill="#1b1a19" text-anchor="end" textLength="46.2" lengthAdjust="spacingAndGlyphs" >0.99</text>
<text x="810" y="888.7" font-size="22" font-family="Liberation Mono" fill="#1b1a19" text-anchor="end" textLength="69.30000000000001" lengthAdjust="spacingAndGlyphs" >317.32</text>
<text x="954" y="888.7" font-size="22" font-family="Liberation Mono" fill="#1b1a19" text-anchor="end" textLength="46.2" lengthAdjust="spacingAndGlyphs" >0.99</text>
<text x="1098" y="888.7" font-size="22" font-family="Liberation Mono" fill="#1b1a19" text-anchor="end" textLength="69.30000000000001" lengthAdjust="spacingAndGlyphs" >317.32</text>
<text x="1242" y="888.7" font-size="22" font-family="Liberation Mono" fill="#1b1a19" text-anchor="end" textLength="46.2" lengthAdjust="spacingAndGlyphs" >0.99</text>
<text x="1386" y="888.7" font-size="22" font-family="Liberation Mono" fill="#1b1a19" text-anchor="end" textLength="69.30000000000001" lengthAdjust="spacingAndGlyphs" >317.32</text>
<text x="77.6" y="921.2" font-size="22" fill="#1b1a19" textLength="131.6" lengthAdjust="spacingAndGlyphs"  stroke="#ffffff" stroke-width="0.37">Water Heaters</text>
<text x="378" y="921.2" font-size="22" font-family="Liberation Mono" fill="#1b1a19" text-anchor="end" textLength="46.2" lengthAdjust="spacingAndGlyphs" >0.79</text>
<text x="522" y="921.2" font-size="22" font-family="Liberation Mono" fill="#1b1a19" text-anchor="end" textLength="69.30000000000001" lengthAdjust="spacingAndGlyphs" >259.27</text>
<text x="666" y="921.2" font-size="22" font-family="Liberation Mono" fill="#1b1a19" text-anchor="end" textLength="46.2" lengthAdjust="spacingAndGlyphs" >0.79</text>
<text x="810" y="921.2" font-size="22" font-family="Liberation Mono" fill="#1b1a19" text-anchor="end" textLength="69.30000000000001" lengthAdjust="spacingAndGlyphs" >259.27</text>
<text x="954" y="921.2" font-size="22" font-family="Liberation Mono" fill="#1b1a19" text-anchor="end" textLength="46.2" lengthAdjust="spacingAndGlyphs" >0.79</text>
<text x="1098" y="921.2" font-size="22" font-family="Liberation Mono" fill="#1b1a19" text-anchor="end" textLength="69.30000000000001" lengthAdjust="spacingAndGlyphs" >259.27</text>
<text x="1242" y="921.2" font-size="22" font-family="Liberation Mono" fill="#1b1a19" text-anchor="end" textLength="46.2" lengthAdjust="spacingAndGlyphs" >0.79</text>
<text x="1386" y="921.2" font-size="22" font-family="Liberation Mono" fill="#1b1a19" text-anchor="end" textLength="69.30000000000001" lengthAdjust="spacingAndGlyphs" >259.27</text>
<text x="77.6" y="953.7" font-size="22" fill="#1b1a19" textLength="109.1" lengthAdjust="spacingAndGlyphs"  stroke="#f5f5f5" stroke-width="0.37">Microwaves</text>
<text x="378" y="953.7" font-size="22" font-family="Liberation Mono" fill="#1b1a19" text-anchor="end" textLength="46.2" lengthAdjust="spacingAndGlyphs" >0.63</text>
<text x="522" y="953.7" font-size="22" font-family="Liberation Mono" fill="#1b1a19" text-anchor="end" textLength="69.30000000000001" lengthAdjust="spacingAndGlyphs" >208.84</text>
<text x="666" y="953.7" font-size="22" font-family="Liberation Mono" fill="#1b1a19" text-anchor="end" textLength="46.2" lengthAdjust="spacingAndGlyphs" >0.63</text>
<text x="810" y="953.7" font-size="22" font-family="Liberation Mono" fill="#1b1a19" text-anchor="end" textLength="69.30000000000001" lengthAdjust="spacingAndGlyphs" >208.84</text>
<text x="954" y="953.7" font-size="22" font-family="Liberation Mono" fill="#1b1a19" text-anchor="end" textLength="46.2" lengthAdjust="spacingAndGlyphs" >0.63</text>
<text x="1098" y="953.7" font-size="22" font-family="Liberation Mono" fill="#1b1a19" text-anchor="end" textLength="69.30000000000001" lengthAdjust="spacingAndGlyphs" >208.84</text>
<text x="1242" y="953.7" font-size="22" font-family="Liberation Mono" fill="#1b1a19" text-anchor="end" textLength="46.2" lengthAdjust="spacingAndGlyphs" >0.63</text>
<text x="1386" y="953.7" font-size="22" font-family="Liberation Mono" fill="#1b1a19" text-anchor="end" textLength="69.30000000000001" lengthAdjust="spacingAndGlyphs" >208.84</text>
<text x="77.6" y="986.2" font-size="22" fill="#1b1a19" textLength="150.7" lengthAdjust="spacingAndGlyphs"  stroke="#ffffff" stroke-width="0.37">Air Conditioners</text>
<text x="378" y="986.2" font-size="22" font-family="Liberation Mono" fill="#1b1a19" text-anchor="end" textLength="46.2" lengthAdjust="spacingAndGlyphs" >0.60</text>
<text x="522" y="986.2" font-size="22" font-family="Liberation Mono" fill="#1b1a19" text-anchor="end" textLength="69.30000000000001" lengthAdjust="spacingAndGlyphs" >207.26</text>
<text x="666" y="986.2" font-size="22" font-family="Liberation Mono" fill="#1b1a19" text-anchor="end" textLength="46.2" lengthAdjust="spacingAndGlyphs" >0.60</text>
<text x="810" y="986.2" font-size="22" font-family="Liberation Mono" fill="#1b1a19" text-anchor="end" textLength="69.30000000000001" lengthAdjust="spacingAndGlyphs" >207.26</text>
<text x="954" y="986.2" font-size="22" font-family="Liberation Mono" fill="#1b1a19" text-anchor="end" textLength="46.2" lengthAdjust="spacingAndGlyphs" >0.60</text>
<text x="1098" y="986.2" font-size="22" font-family="Liberation Mono" fill="#1b1a19" text-anchor="end" textLength="69.30000000000001" lengthAdjust="spacingAndGlyphs" >207.26</text>
<text x="1242" y="986.2" font-size="22" font-family="Liberation Mono" fill="#1b1a19" text-anchor="end" textLength="46.2" lengthAdjust="spacingAndGlyphs" >0.60</text>
<text x="1386" y="986.2" font-size="22" font-family="Liberation Mono" fill="#1b1a19" text-anchor="end" textLength="69.30000000000001" lengthAdjust="spacingAndGlyphs" >207.26</text>
<text x="77.6" y="1018.7" font-size="22" fill="#1b1a19" textLength="40.9" lengthAdjust="spacingAndGlyphs"  stroke="#f5f5f5" stroke-width="0.37">Fans</text>
<text x="378" y="1018.7" font-size="22" font-family="Liberation Mono" fill="#1b1a19" text-anchor="end" textLength="46.2" lengthAdjust="spacingAndGlyphs" >0.18</text>
<text x="522" y="1018.7" font-size="22" font-family="Liberation Mono" fill="#1b1a19" text-anchor="end" textLength="57.75" lengthAdjust="spacingAndGlyphs" >61.81</text>
<text x="666" y="1018.7" font-size="22" font-family="Liberation Mono" fill="#1b1a19" text-anchor="end" textLength="46.2" lengthAdjust="spacingAndGlyphs" >0.18</text>
<text x="810" y="1018.7" font-size="22" font-family="Liberation Mono" fill="#1b1a19" text-anchor="end" textLength="57.75" lengthAdjust="spacingAndGlyphs" >61.81</text>
<text x="954" y="1018.7" font-size="22" font-family="Liberation Mono" fill="#1b1a19" text-anchor="end" textLength="46.2" lengthAdjust="spacingAndGlyphs" >0.18</text>
<text x="1098" y="1018.7" font-size="22" font-family="Liberation Mono" fill="#1b1a19" text-anchor="end" textLength="57.75" lengthAdjust="spacingAndGlyphs" >61.81</text>
<text x="1242" y="1018.7" font-size="22" font-family="Liberation Mono" fill="#1b1a19" text-anchor="end" textLength="46.2" lengthAdjust="spacingAndGlyphs" >0.18</text>
<text x="1386" y="1018.7" font-size="22" font-family="Liberation Mono" fill="#1b1a19" text-anchor="end" textLength="57.75" lengthAdjust="spacingAndGlyphs" >61.81</text>
<rect x="42.5" y="1050.2" width="14" height="14" fill="none" stroke="#4a4a4a" stroke-width="1.2"/>
<line x1="45.5" y1="1057.2" x2="53.5" y2="1057.2" stroke="#4a4a4a" stroke-width="1.2" />
<text x="68.3" y="1067.8" font-size="22" font-weight="bold" fill="#1b1a19" textLength="122.8" lengthAdjust="spacingAndGlyphs"  stroke="#ffffff" stroke-width="0.37">TV and Video</text>
<text x="378" y="1067.8" font-size="22" font-family="Liberation Mono" font-weight="bold" fill="#1b1a19" text-anchor="end" textLength="46.2" lengthAdjust="spacingAndGlyphs" >8.16</text>
<text x="522" y="1067.8" font-size="22" font-family="Liberation Mono" font-weight="bold" fill="#1b1a19" text-anchor="end" textLength="92.4" lengthAdjust="spacingAndGlyphs" >2,730.90</text>
<text x="666" y="1067.8" font-size="22" font-family="Liberation Mono" font-weight="bold" fill="#1b1a19" text-anchor="end" textLength="46.2" lengthAdjust="spacingAndGlyphs" >8.16</text>
<text x="810" y="1067.8" font-size="22" font-family="Liberation Mono" font-weight="bold" fill="#1b1a19" text-anchor="end" textLength="92.4" lengthAdjust="spacingAndGlyphs" >2,730.90</text>
<text x="954" y="1067.8" font-size="22" font-family="Liberation Mono" font-weight="bold" fill="#1b1a19" text-anchor="end" textLength="46.2" lengthAdjust="spacingAndGlyphs" >8.16</text>
<text x="1098" y="1067.8" font-size="22" font-family="Liberation Mono" font-weight="bold" fill="#1b1a19" text-anchor="end" textLength="92.4" lengthAdjust="spacingAndGlyphs" >2,730.90</text>
<text x="1242" y="1067.8" font-size="22" font-family="Liberation Mono" font-weight="bold" fill="#1b1a19" text-anchor="end" textLength="46.2" lengthAdjust="spacingAndGlyphs" >8.16</text>
<text x="1386" y="1067.8" font-size="22" font-family="Liberation Mono" font-weight="bold" fill="#1b1a19" text-anchor="end" textLength="92.4" lengthAdjust="spacingAndGlyphs" >2,730.90</text>
<text x="77.6" y="1100.2" font-size="22" fill="#1b1a19" textLength="150.9" lengthAdjust="spacingAndGlyphs"  stroke="#f5f5f5" stroke-width="0.37">Home Theater …</text>
<text x="378" y="1100.2" font-size="22" font-family="Liberation Mono" fill="#1b1a19" text-anchor="end" textLength="46.2" lengthAdjust="spacingAndGlyphs" >3.93</text>
<text x="522" y="1100.2" font-size="22" font-family="Liberation Mono" fill="#1b1a19" text-anchor="end" textLength="92.4" lengthAdjust="spacingAndGlyphs" >1,302.16</text>
<text x="666" y="1100.2" font-size="22" font-family="Liberation Mono" fill="#1b1a19" text-anchor="end" textLength="46.2" lengthAdjust="spacingAndGlyphs" >3.93</text>
<text x="810" y="1100.2" font-size="22" font-family="Liberation Mono" fill="#1b1a19" text-anchor="end" textLength="92.4" lengthAdjust="spacingAndGlyphs" >1,302.16</text>
<text x="954" y="1100.2" font-size="22" font-family="Liberation Mono" fill="#1b1a19" text-anchor="end" textLength="46.2" lengthAdjust="spacingAndGlyphs" >3.93</text>
<text x="1098" y="1100.2" font-size="22" font-family="Liberation Mono" fill="#1b1a19" text-anchor="end" textLength="92.4" lengthAdjust="spacingAndGlyphs" >1,302.16</text>
<text x="1242" y="1100.2" font-size="22" font-family="Liberation Mono" fill="#1b1a19" text-anchor="end" textLength="46.2" lengthAdjust="spacingAndGlyphs" >3.93</text>
<text x="1386" y="1100.2" font-size="22" font-family="Liberation Mono" fill="#1b1a19" text-anchor="end" textLength="92.4" lengthAdjust="spacingAndGlyphs" >1,302.16</text>
<text x="77.6" y="1132.7" font-size="22" fill="#1b1a19" textLength="100" lengthAdjust="spacingAndGlyphs"  stroke="#ffffff" stroke-width="0.37">Televisions</text>
<text x="378" y="1132.7" font-size="22" font-family="Liberation Mono" fill="#1b1a19" text-anchor="end" textLength="46.2" lengthAdjust="spacingAndGlyphs" >1.46</text>
<text x="522" y="1132.7" font-size="22" font-family="Liberation Mono" fill="#1b1a19" text-anchor="end" textLength="69.30000000000001" lengthAdjust="spacingAndGlyphs" >911.50</text>
<text x="666" y="1132.7" font-size="22" font-family="Liberation Mono" fill="#1b1a19" text-anchor="end" textLength="46.2" lengthAdjust="spacingAndGlyphs" >1.46</text>
<text x="810" y="1132.7" font-size="22" font-family="Liberation Mono" fill="#1b1a19" text-anchor="end" textLength="69.30000000000001" lengthAdjust="spacingAndGlyphs" >911.50</text>
<text x="954" y="1132.7" font-size="22" font-family="Liberation Mono" fill="#1b1a19" text-anchor="end" textLength="46.2" lengthAdjust="spacingAndGlyphs" >1.46</text>
<text x="1098" y="1132.7" font-size="22" font-family="Liberation Mono" fill="#1b1a19" text-anchor="end" textLength="69.30000000000001" lengthAdjust="spacingAndGlyphs" >911.50</text>
<text x="1242" y="1132.7" font-size="22" font-family="Liberation Mono" fill="#1b1a19" text-anchor="end" textLength="46.2" lengthAdjust="spacingAndGlyphs" >1.46</text>
<text x="1386" y="1132.7" font-size="22" font-family="Liberation Mono" fill="#1b1a19" text-anchor="end" textLength="69.30000000000001" lengthAdjust="spacingAndGlyphs" >911.50</text>
<text x="77.6" y="1165.2" font-size="22" fill="#1b1a19" textLength="90.8" lengthAdjust="spacingAndGlyphs"  stroke="#f5f5f5" stroke-width="0.37">Car Video</text>
<text x="378" y="1165.2" font-size="22" font-family="Liberation Mono" fill="#1b1a19" text-anchor="end" textLength="46.2" lengthAdjust="spacingAndGlyphs" >1.36</text>
<text x="522" y="1165.2" font-size="22" font-family="Liberation Mono" fill="#1b1a19" text-anchor="end" textLength="69.30000000000001" lengthAdjust="spacingAndGlyphs" >449.03</text>
<text x="666" y="1165.2" font-size="22" font-family="Liberation Mono" fill="#1b1a19" text-anchor="end" textLength="46.2" lengthAdjust="spacingAndGlyphs" >1.36</text>
<text x="810" y="1165.2" font-size="22" font-family="Liberation Mono" fill="#1b1a19" text-anchor="end" textLength="69.30000000000001" lengthAdjust="spacingAndGlyphs" >449.03</text>
<text x="954" y="1165.2" font-size="22" font-family="Liberation Mono" fill="#1b1a19" text-anchor="end" textLength="46.2" lengthAdjust="spacingAndGlyphs" >1.36</text>
<text x="1098" y="1165.2" font-size="22" font-family="Liberation Mono" fill="#1b1a19" text-anchor="end" textLength="69.30000000000001" lengthAdjust="spacingAndGlyphs" >449.03</text>
<text x="1242" y="1165.2" font-size="22" font-family="Liberation Mono" fill="#1b1a19" text-anchor="end" textLength="46.2" lengthAdjust="spacingAndGlyphs" >1.36</text>
<text x="1386" y="1165.2" font-size="22" font-family="Liberation Mono" fill="#1b1a19" text-anchor="end" textLength="69.30000000000001" lengthAdjust="spacingAndGlyphs" >449.03</text>
<text x="77.6" y="1197.7" font-size="22" fill="#1b1a19" textLength="108.7" lengthAdjust="spacingAndGlyphs"  stroke="#ffffff" stroke-width="0.37">VCD &amp; DVD</text>
<text x="378" y="1197.7" font-size="22" font-family="Liberation Mono" fill="#1b1a19" text-anchor="end" textLength="46.2" lengthAdjust="spacingAndGlyphs" >0.20</text>
<text x="522" y="1197.7" font-size="22" font-family="Liberation Mono" fill="#1b1a19" text-anchor="end" textLength="57.75" lengthAdjust="spacingAndGlyphs" >68.22</text>
<text x="666" y="1197.7" font-size="22" font-family="Liberation Mono" fill="#1b1a19" text-anchor="end" textLength="46.2" lengthAdjust="spacingAndGlyphs" >0.20</text>
<text x="810" y="1197.7" font-size="22" font-family="Liberation Mono" fill="#1b1a19" text-anchor="end" textLength="57.75" lengthAdjust="spacingAndGlyphs" >68.22</text>
<text x="954" y="1197.7" font-size="22" font-family="Liberation Mono" fill="#1b1a19" text-anchor="end" textLength="46.2" lengthAdjust="spacingAndGlyphs" >0.20</text>
<text x="1098" y="1197.7" font-size="22" font-family="Liberation Mono" fill="#1b1a19" text-anchor="end" textLength="57.75" lengthAdjust="spacingAndGlyphs" >68.22</text>
<text x="1242" y="1197.7" font-size="22" font-family="Liberation Mono" fill="#1b1a19" text-anchor="end" textLength="46.2" lengthAdjust="spacingAndGlyphs" >0.20</text>
<text x="1386" y="1197.7" font-size="22" font-family="Liberation Mono" fill="#1b1a19" text-anchor="end" textLength="57.75" lengthAdjust="spacingAndGlyphs" >68.22</text>
<line x1="4" y1="1220.7" x2="2243.5" y2="1220.7" stroke="#e1e1e1" stroke-width="1.5" />
<text x="4" y="1250.8" font-size="23" fill="#1b1a19" textLength="130" lengthAdjust="spacingAndGlyphs"  stroke="#ffffff" stroke-width="0.39">Total rows: 41</text>
<text x="2110.1" y="1250.2" font-size="22" fill="#1b1a19" textLength="9.9" lengthAdjust="spacingAndGlyphs"  stroke="#ffffff" stroke-width="0.37">1</text>
<text x="2131" y="1250.2" font-size="22" fill="#1b1a19" textLength="17.7" lengthAdjust="spacingAndGlyphs"  stroke="#ffffff" stroke-width="0.37">to</text>
<text x="2158.6" y="1250.2" font-size="22" fill="#1b1a19" textLength="22.0" lengthAdjust="spacingAndGlyphs"  stroke="#ffffff" stroke-width="0.37">22</text>
<text x="2191.6" y="1250.2" font-size="22" fill="#1b1a19" textLength="18.7" lengthAdjust="spacingAndGlyphs"  stroke="#ffffff" stroke-width="0.37">of</text>
<text x="2220.3" y="1250.2" font-size="22" fill="#1b1a19" textLength="20.9" lengthAdjust="spacingAndGlyphs"  stroke="#ffffff" stroke-width="0.37">41</text>
<path d="M1542.75 1242.97 L1546.27 1243.30 L1546.27 1247.10 L1542.75 1247.43 L1541.41 1250.66 L1543.66 1253.38 L1540.98 1256.06 L1538.26 1253.81 L1535.03 1255.15 L1534.70 1258.67 L1530.90 1258.67 L1530.57 1255.15 L1527.34 1253.81 L1524.62 1256.06 L1521.94 1253.38 L1524.19 1250.66 L1522.85 1247.43 L1519.33 1247.10 L1519.33 1243.30 L1522.85 1242.97 L1524.19 1239.74 L1521.94 1237.02 L1524.62 1234.34 L1527.34 1236.59 L1530.57 1235.25 L1530.90 1231.73 L1534.70 1231.73 L1535.03 1235.25 L1538.26 1236.59 L1540.98 1234.34 L1543.66 1237.02 L1541.41 1239.74 Z" stroke="#3b3a39" stroke-width="1.5" fill="none" stroke-linejoin="round"/>
<circle cx="1532.8" cy="1245.2" r="5.2" fill="none" stroke="#1f5bb0" stroke-width="1.6"/>
<line x1="1567.4" y1="1246.1" x2="1585.3" y2="1246.1" stroke="#3b3a39" stroke-width="1.8" />
<rect x="1601.5" y="1231.5" width="97" height="34.5" fill="#fff" stroke="#8a8a8a" stroke-width="1.3"/>
<text x="1623.8" y="1255.9" font-size="22" font-family="Liberation Mono" fill="#1b1a19" textLength="32.3" lengthAdjust="spacingAndGlyphs" >100</text>
<text x="1661.3" y="1255.9" font-size="22" fill="#1b1a19" textLength="15.5" lengthAdjust="spacingAndGlyphs"  stroke="#ffffff" stroke-width="0.37">%</text>
<path d="M1709.7 1246.9 L1728.1 1246.9 M1718.9 1238 L1718.9 1255.9" stroke="#3b3a39" stroke-width="1.8" fill="none" />
<path d="M1783.3 1236 L1783.3 1253.5" stroke="#9a9a9a" stroke-width="2.4" fill="none" />
<path d="M1799 1237.5 L1790.5 1244.7 L1799 1252" stroke="#9a9a9a" stroke-width="2.4" fill="none" />
<path d="M1822 1237.5 L1813.5 1244.7 L1822 1252" stroke="#9a9a9a" stroke-width="2.4" fill="none" />
<text x="1833.8" y="1250.2" font-size="21.7" fill="#1b1a19" textLength="42.5" lengthAdjust="spacingAndGlyphs"  stroke="#ffffff" stroke-width="0.37">Page</text>
<rect x="1884.5" y="1226.5" width="44.6" height="35.2" fill="#fff" stroke="#dcdcdc" stroke-width="1"/>
<text x="1902.7" y="1250.2" font-size="21.7" fill="#1b1a19" textLength="9.3" lengthAdjust="spacingAndGlyphs"  stroke="#ffffff" stroke-width="0.37">1</text>
<text x="1937.3" y="1250.2" font-size="21.7" fill="#1b1a19" textLength="34.1" lengthAdjust="spacingAndGlyphs"  stroke="#ffffff" stroke-width="0.37">of 2</text>
<path d="M1984.5 1237.5 L1993 1244.7 L1984.5 1252" stroke="#252423" stroke-width="2.8" fill="none" />
<path d="M2006 1237.5 L2014.5 1244.7 L2006 1252" stroke="#252423" stroke-width="2.8" fill="none" />
<path d="M2021.8 1236 L2021.8 1253.5" stroke="#252423" stroke-width="2.6" fill="none" />
<line x1="2250.6" y1="0" x2="2250.6" y2="1270" stroke="#c4c4c4" stroke-width="1" />
<rect x="2249.5" y="0" width="3" height="9" fill="#9a9a9a" />
<rect x="2247.2" y="627" width="5.7" height="18" fill="#999" />
<line x1="2250.1" y1="627" x2="2250.1" y2="645" stroke="#c0c0c0" stroke-width="1" />
<rect x="2248" y="1264.5" width="4" height="5.5" fill="#9a9a9a" />
</svg>
<div class="dlg"></div>
<svg width="2257" height="1270" viewBox="0 0 2257 1270">
<text x="915.5" y="335" font-size="38.8" fill="#2b2a29" textLength="364.8" lengthAdjust="spacingAndGlyphs" stroke="#fff" stroke-width="0.6">Allowed User Controls</text>
<path d="M1312 310.5 L1333 331.5 M1333 310.5 L1312 331.5" stroke="#1b1a19" stroke-width="1.8" fill="none" />
<text x="913.5" y="402" font-size="22.6" fill="#1b1a19" textLength="71.3" lengthAdjust="spacingAndGlyphs"  stroke="#ffffff" stroke-width="0.38">Toolbar</text>
<rect x="1140.5" y="371.5" width="179" height="48" fill="#fff" stroke="#cfcfcf" stroke-width="1"/>
<text x="1160" y="402" font-size="22" fill="#1b1a19" textLength="42.5" lengthAdjust="spacingAndGlyphs"  stroke="#ffffff" stroke-width="0.37">Auto</text>
<path d="M1267.6 389 L1278.3 400.5 L1289 389" stroke="#1b1a19" stroke-width="1.5" fill="none" stroke-linecap="round" stroke-linejoin="round"/>
<rect x="916.8" y="434.6" width="28" height="28" fill="#0078d4" rx="5"/>
<path d="M921.8 448.3 L929.4 455.40000000000003 L940.8 443.6" stroke="#f4faff" stroke-width="3.3" fill="none" stroke-linejoin="miter"/>
<text x="965.2" y="454.5" font-size="21.5" fill="#1b1a19" textLength="90.2" lengthAdjust="spacingAndGlyphs"  stroke="#ffffff" stroke-width="0.37">Home Tab</text>
<path d="M1298.2 442.6 L1308.75 453.3 L1319.3 442.6" stroke="#1b1a19" stroke-width="1.5" fill="none" stroke-linecap="round" stroke-linejoin="round"/>
<rect x="916.8" y="482" width="28" height="28" fill="#0078d4" rx="5"/>
<path d="M921.8 495.7 L929.4 502.8 L940.8 491" stroke="#f4faff" stroke-width="3.3" fill="none" stroke-linejoin="miter"/>
<text x="965.2" y="501.7" font-size="21.5" fill="#1b1a19" textLength="98.1" lengthAdjust="spacingAndGlyphs"  stroke="#ffffff" stroke-width="0.37">Export Tab</text>
<path d="M1298.2 488.5 L1308.75 499.5 L1319.3 488.5" stroke="#1b1a19" stroke-width="1.5" fill="none" stroke-linecap="round" stroke-linejoin="round"/>
<rect x="956.5" y="520" width="236.5" height="142" fill="none" rx="7" stroke="#d92b2b" stroke-width="2"/>
<rect x="971" y="529" width="28" height="28" fill="#0078d4" rx="5"/>
<path d="M976 542.7 L983.6 549.8 L995 538" stroke="#f4faff" stroke-width="3.3" fill="none" stroke-linejoin="miter"/>
<text x="1014.7" y="551.6" font-size="21.5" fill="#3b3a39" textLength="129.9" lengthAdjust="spacingAndGlyphs"  stroke="#ffffff" stroke-width="0.37">Export to PDF</text>
<rect x="971" y="575.7" width="28" height="28" fill="#0078d4" rx="5"/>
<path d="M976 589.4000000000001 L983.6 596.5 L995 584.7" stroke="#f4faff" stroke-width="3.3" fill="none" stroke-linejoin="miter"/>
<text x="1014.7" y="598.5" font-size="21.5" fill="#3b3a39" textLength="141.9" lengthAdjust="spacingAndGlyphs"  stroke="#ffffff" stroke-width="0.37">Export to Excel</text>
<rect x="971" y="622.4" width="28" height="28" fill="#0078d4" rx="5"/>
<path d="M976 636.1 L983.6 643.1999999999999 L995 631.4" stroke="#f4faff" stroke-width="3.3" fill="none" stroke-linejoin="miter"/>
<text x="1014.7" y="645.1" font-size="21.5" fill="#3b3a39" textLength="85" lengthAdjust="spacingAndGlyphs"  stroke="#ffffff" stroke-width="0.37">Schedule</text>
<rect x="917.3" y="669.3" width="27" height="27" fill="#f5f5f5" rx="5" stroke="#8a8a8a" stroke-width="1"/>
<text x="964.5" y="688.7" font-size="21.5" fill="#1b1a19" textLength="116" lengthAdjust="spacingAndGlyphs"  stroke="#ffffff" stroke-width="0.37">Scenario Tab</text>
<path d="M1298.2 675.5 L1308.75 687 L1319.3 675.5" stroke="#1b1a19" stroke-width="1.5" fill="none" stroke-linecap="round" stroke-linejoin="round"/>
<rect x="916.8" y="715.7" width="28" height="28" fill="#0078d4" rx="5"/>
<path d="M921.8 729.4000000000001 L929.4 736.5 L940.8 724.7" stroke="#f4faff" stroke-width="3.3" fill="none" stroke-linejoin="miter"/>
<text x="964.5" y="735.3" font-size="21.5" fill="#1b1a19" textLength="129.9" lengthAdjust="spacingAndGlyphs"  stroke="#ffffff" stroke-width="0.37">Writeback Tab</text>
<path d="M1298.2 722 L1308.75 733.5 L1319.3 722" stroke="#1b1a19" stroke-width="1.5" fill="none" stroke-linecap="round" stroke-linejoin="round"/>
<text x="913.5" y="786.8" font-size="21.5" fill="#1b1a19" textLength="101.2" lengthAdjust="spacingAndGlyphs"  stroke="#ffffff" stroke-width="0.37">Comments</text>
<rect x="1262.3" y="767.2" width="57" height="31.6" fill="#0078d4" rx="15.8"/>
<circle cx="1303.5" cy="783.0" r="11" fill="#f5f5f5"/>
<text x="913.5" y="852.1" font-size="21.5" fill="#1b1a19" textLength="128.3" lengthAdjust="spacingAndGlyphs"  stroke="#ffffff" stroke-width="0.37">Show Gripper</text>
<rect x="1262.3" y="832.2" width="57" height="31.6" fill="#0078d4" rx="15.8"/>
<circle cx="1303.5" cy="848.0" r="11" fill="#f5f5f5"/>
<text x="913.5" y="916.7" font-size="21.5" fill="#1b1a19" textLength="208.9" lengthAdjust="spacingAndGlyphs"  stroke="#ffffff" stroke-width="0.37">Show Floating Toolbar</text>
<rect x="1262.8" y="897.3" width="56" height="30.6" fill="#f5f5f5" rx="15.3" stroke="#8a8a8a" stroke-width="1"/>
<circle cx="1278.1" cy="912.5999999999999" r="11" fill="#333"/>
<text x="913.5" y="981.3" font-size="21.5" fill="#1b1a19" textLength="204.1" lengthAdjust="spacingAndGlyphs"  stroke="#ffffff" stroke-width="0.37">Reorder Row/Column</text>
<clipPath id="clipT"><rect x="1250" y="950" width="80" height="32.5"/></clipPath>
<g clip-path="url(#clipT)">
<rect x="1262.3" y="961.7" width="57" height="31.6" fill="#0078d4" rx="15.8"/>
<circle cx="1303.5" cy="977.5" r="11" fill="#f5f5f5"/>
</g>
<rect x="1349.5" y="370.8" width="12" height="612" fill="#fafafa" rx="6"/>
<rect x="1349.5" y="370.8" width="12" height="444" fill="#a9a9a9" rx="6"/>
</svg>
</body></html>
